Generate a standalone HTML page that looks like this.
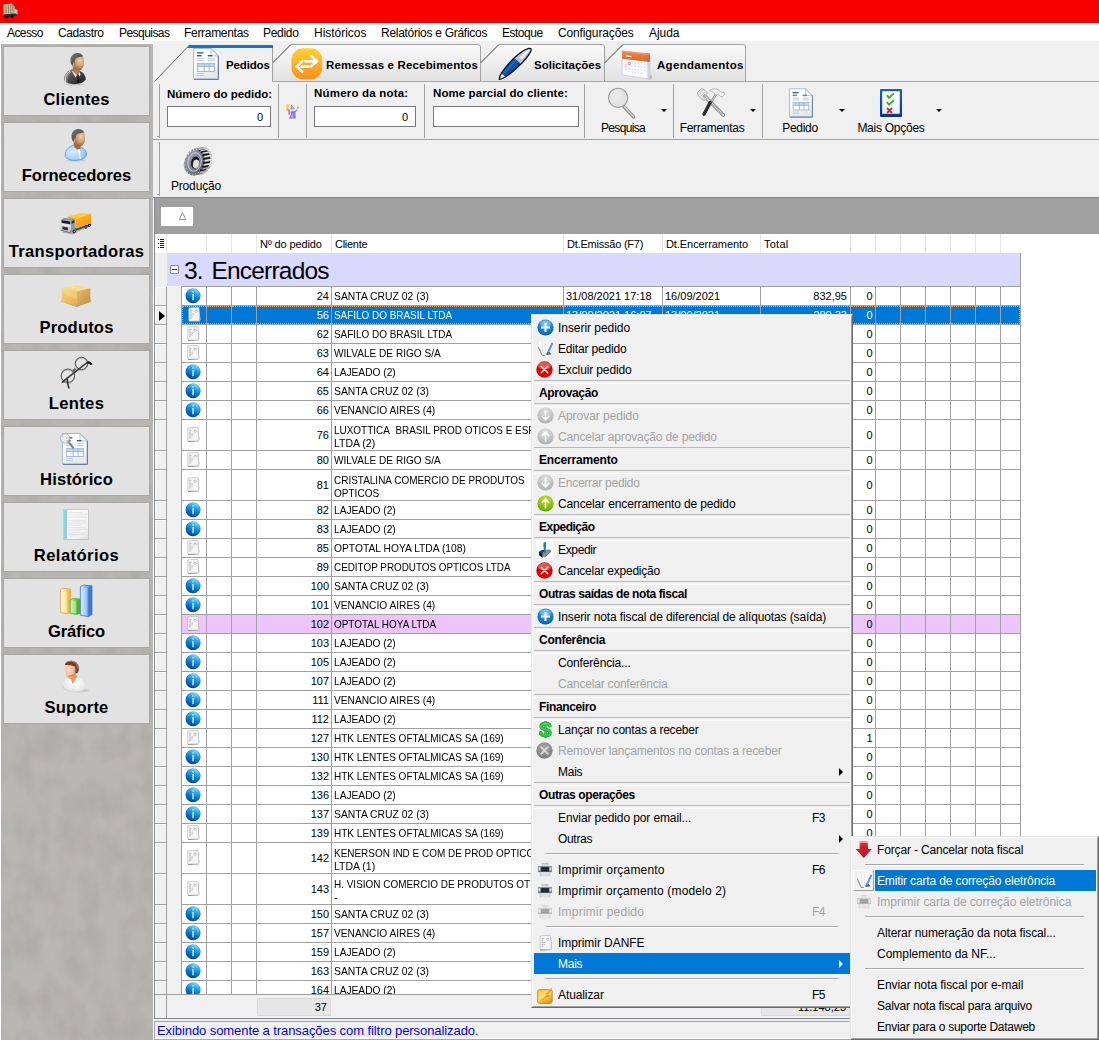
<!DOCTYPE html>
<html><head><meta charset="utf-8"><title>Pedidos</title>
<style>
html,body{margin:0;padding:0}
body{width:1099px;height:1040px;overflow:hidden;position:relative;background:#f0f0f0;font-family:"Liberation Sans",sans-serif;font-size:12px;color:#000}
div,span{box-sizing:border-box}
#title{position:absolute;left:0;top:0;width:1099px;height:23px;background:#f90000}
#menubar{position:absolute;left:0;top:23px;width:1099px;height:18px;background:#fff}
#mbline{position:absolute;left:0;top:41px;width:1099px;height:2px;background:#f0f0f0}
#mbline2{position:absolute;left:0;top:43px;width:1099px;height:1px;background:#fff}
#menubar .mi{position:absolute;top:3px;font-size:12px;line-height:15px;white-space:nowrap}
/* sidebar */
#side{position:absolute;left:1px;top:44px;width:152px;height:996px;background:#b3b1ae;overflow:hidden}
#sidebgw{position:absolute;left:0;top:42px;width:153px;height:998px;background:#fff}
#sidew{position:absolute;left:153px;top:43px;width:2px;height:996px;background:#fff}
#side .edge{display:none}
.sb{position:absolute;left:2px;width:147px;height:70px;background:#e2e2e2;border:1px solid #a9a7a5}
.sb .sl{position:absolute;left:0;top:42px;width:145px;text-align:center;font-weight:bold;font-size:16.6px;line-height:22px;white-space:nowrap;letter-spacing:0}
.sb svg.si{position:absolute;left:52px;top:-1px}
/* tabs */
#tabs{position:absolute;left:153px;top:43px;width:946px;height:39px;background:#f0f0f0}
#tabs svg{position:absolute;left:0;top:0}
.tl{position:absolute;font-weight:bold;font-size:11.5px;line-height:14px;white-space:nowrap;top:15px}
/* toolbars */
#tb1{position:absolute;left:153px;top:82px;width:946px;height:57px;background:#f0f0f0}
#tb2{position:absolute;left:153px;top:140px;width:946px;height:58px;background:#f0f0f0}
.tbline{position:absolute;left:153px;width:946px;height:1px;background:#a0a0a0}
.vsep{position:absolute;width:1px;background:#a0a0a0}
.lbl{position:absolute;font-weight:bold;font-size:11.5px;line-height:13px;white-space:nowrap}
.inp{position:absolute;height:21px;background:#fff;border:1px solid #7a7a7a;font-size:11px;line-height:20px;text-align:right;padding-right:7px}
.tbt{position:absolute;font-size:12px;line-height:14px;white-space:nowrap;text-align:center}
.dd{position:absolute;width:0;height:0;border-left:3px solid transparent;border-right:3px solid transparent;border-top:3px solid #000}
/* grid */
#gframe{position:absolute;left:154px;top:197px;width:946px;height:822px;border:1px solid #828790;background:#fff}
#gpanel{position:absolute;left:155px;top:198px;width:944px;height:36px;background:#a0a0a0}
#gbox{position:absolute;left:6px;top:9px;width:32px;height:19px;background:#fff}
#grid{position:absolute;left:155px;top:234px;width:944px;height:784px;background:#fff;overflow:hidden;font-size:11px}
#ghead{position:absolute;left:0;top:0;width:944px;height:19px;background:#fff}
.hsep{position:absolute;top:0;width:1px;height:19px;background:#e6e6e6}
.ht{position:absolute;top:4px;font-size:11px;line-height:13px;white-space:nowrap}
#gind{position:absolute;left:0;top:19px;width:12px;height:741px;background:#f0f0f0}
#grow{position:absolute;left:12px;top:19px;width:853px;height:33px;background:#d9d9fb}
#grow .gexp{position:absolute;left:3px;top:12px;width:9px;height:9px;border:1px solid #8c8c8c;background:#f4f4f4;border-radius:1px}
#grow .gexp i{position:absolute;left:1px;top:3px;width:5px;height:1px;background:#2a3a9a}
#grow .gt{position:absolute;left:17px;top:3px;font-size:24.5px;line-height:29px;white-space:nowrap;letter-spacing:-0.8px;word-spacing:2.6px}
#glineR{position:absolute;left:865px;top:19px;width:1px;height:741px;background:#a0a0a0}
#glineT{position:absolute;left:26px;top:52px;width:840px;height:1px;background:#a0a0a0}
#gbody{position:absolute;left:0;top:0;width:944px;height:760px;overflow:hidden}
.r{position:absolute;left:0;width:866px;background:#a0a0a0}
.r:before{content:"";position:absolute;left:12px;top:-1px;width:14px;height:calc(100% + 1px);background:#f0f0f0}
.r .ind{position:absolute;left:0;top:0;width:11px;height:calc(100% - 1px);background:#f0f0f0;border-left:1px solid #fff;border-top:1px solid #fff}
.c{position:absolute;top:0;height:calc(100% - 1px);background:#fff;white-space:nowrap;overflow:hidden}
.c span{position:absolute;top:3px;line-height:13px;font-size:11px}
.c3 span{right:2px}
.c4 span{left:2px;transform-origin:0 0}
.c5 span{left:2px}
.c6 span{left:2px}
.c7 span{right:3px}
.c8 span{right:2.4px}
.ic{position:absolute;left:4px;top:1px}
.dbl .ic{margin-top:6px}
.dbl .c3 span,.dbl .c8 span{top:9px}

.sel .c{background:#0078d7;color:#fff;border-top:1px dotted #f0a050;border-bottom:1px dotted #f0a050}
.sel .c span{top:2px}.sel .ic{margin-top:-1px}
.sel .c0{border-left:1px dotted #f0a050}.sel .c14{border-right:1px dotted #f0a050}
.pink .c{background:#edc5fc}
#gfoot{position:absolute;left:0;top:760px;width:944px;height:24px;background:#f0f0f0;border-top:1px solid #a0a0a0}
#gfoot .find{position:absolute;left:0;top:0;width:12px;height:23px;border-right:1px solid #a0a0a0}
#gfoot .fbox{position:absolute;top:3px;height:18px;background:#e6e6e6;border:1px solid #d9d9d9}
#gfoot .fbox span{position:absolute;right:3px;top:2px;font-size:11px;line-height:13px}
#statusbg{position:absolute;left:154px;top:1019px;width:945px;height:21px;background:#f0f0f0;border-bottom:1px solid #a9a8a6}
#status{position:absolute;left:154px;top:1021px;width:945px;height:18px;background:#f0f0f0;border-top:1px solid #a0a0a0;border-left:1px solid #a0a0a0;border-bottom:1px solid #fff}
#status span{position:absolute;left:2px;top:1px;font-size:13px;line-height:15px;color:#0000f0;white-space:nowrap;letter-spacing:-0.08px}
/* menus */
.menu{position:absolute;background:#f2f2f2;border:1px solid #c4c4c4;box-shadow:2px 2px 2px rgba(0,0,0,.45);font-size:12px}
.m{position:absolute;left:1px;height:21px;white-space:nowrap}
.m .t{position:absolute;left:24px;top:4px;line-height:15px;font-size:12px}
.m .k{position:absolute;top:4px;line-height:15px;font-size:12px;letter-spacing:-0.6px}
.m.dis{color:#a2a2a2}
.m.hi{background:#0078d7;color:#fff}
.m svg.mi16{position:absolute;left:4px;top:2px}
.mh{position:absolute;left:1px;height:25px;white-space:nowrap}
.mh b{position:absolute;left:5px;top:6px;font-size:12px;line-height:15px}
.mh i{position:absolute;left:0;width:100%;height:2px;border-top:1px solid #b8b8b8;border-bottom:1px solid #fff}
.ms{position:absolute;height:2px;border-top:1px solid #a8a8a8;border-bottom:1px solid #fff}
.arr{position:absolute;width:0;height:0;border-top:4px solid transparent;border-bottom:4px solid transparent;border-left:4px solid #000}
.hi .arr{border-left-color:#fff}
.menu{border:none;box-shadow:none;background:#f0f0f0}
.menu:before{content:"";position:absolute;left:0;top:0;right:0;bottom:0;border-style:solid;border-width:1px;border-color:#e3e3e3 #696969 #696969 #e3e3e3}
.menu:after{content:"";position:absolute;left:1px;top:1px;right:1px;bottom:1px;border-style:solid;border-width:1px;border-color:#fff #a0a0a0 #a0a0a0 #fff}
.m,.mh,.ms{z-index:2}
.hib{position:absolute;top:0;height:21px;background:#0078d7}
.ibtn{position:absolute;left:0;top:0;width:21px;height:21px;border:1px solid;border-color:#fff #a0a0a0 #a0a0a0 #fff}

</style></head>
<body>
<div id="title"></div>
<svg style="position:absolute;left:2px;top:3px" width="17" height="17" viewBox="0 0 17 17"><path d="M1 1.5 L9.5 0.5 L13 4 L13 10 L1.5 12 Z" fill="#c9bb94"/><path d="M9.5 0.5 L13 4 L13 10 L10.5 11 Z" fill="#a89a78"/><path d="M13 6 L15.5 7 L15.5 11.5 L12 12.5 L12 6.5Z" fill="#c8c2b4"/><path d="M1.5 11.5 L14 10.5 L15.5 12.5 L3 15.5 Z" fill="#2a2a2a"/><rect x="3.5" y="2.5" width="1" height="8" fill="#8f8466"/><rect x="6" y="2.3" width="1" height="8" fill="#8f8466"/><rect x="8.3" y="2" width="1" height="8" fill="#8f8466"/><circle cx="4" cy="14" r="1.6" fill="#111"/><circle cx="10" cy="13.5" r="1.6" fill="#111"/></svg>
<div id="menubar"><span class="mi" style="left:7px;letter-spacing:-0.596px">Acesso</span><span class="mi" style="left:58px;letter-spacing:-0.395px">Cadastro</span><span class="mi" style="left:119px;letter-spacing:-0.546px">Pesquisas</span><span class="mi" style="left:184px;letter-spacing:-0.302px">Ferramentas</span><span class="mi" style="left:263px;letter-spacing:-0.288px">Pedido</span><span class="mi" style="left:314px;letter-spacing:-0.02px">Históricos</span><span class="mi" style="left:381px;letter-spacing:-0.282px">Relatórios e Gráficos</span><span class="mi" style="left:502px;letter-spacing:-0.493px">Estoque</span><span class="mi" style="left:558px;letter-spacing:-0.14px">Configurações</span><span class="mi" style="left:649px;letter-spacing:-0.054px">Ajuda</span></div><div id="mbline"></div><div id="mbline2"></div>
<div id="sidebgw"></div><div id="side"><svg style="position:absolute;left:0;top:0" width="152" height="996"><defs><filter id="mb" x="0" y="0" width="100%" height="100%" color-interpolation-filters="sRGB"><feTurbulence type="fractalNoise" baseFrequency="0.03 0.022" numOctaves="4" seed="11"/><feColorMatrix type="matrix" values="0 0 0 0 0.702  0 0 0 0 0.694  0 0 0 0 0.682  0.9 0.9 0 0 -0.62"/></filter><filter id="mb2" x="0" y="0" width="100%" height="100%" color-interpolation-filters="sRGB"><feTurbulence type="fractalNoise" baseFrequency="0.05 0.035" numOctaves="3" seed="3"/><feColorMatrix type="matrix" values="0 0 0 0 0.62  0 0 0 0 0.61  0 0 0 0 0.60  0 0.9 0.9 0 -0.72"/></filter></defs><rect width="152" height="996" fill="#b9b7b4"/><rect width="152" height="996" filter="url(#mb)" opacity="0.55"/><rect width="152" height="996" filter="url(#mb2)" opacity="0.6"/></svg>
<div class="sb" style="top:2px"><svg class="si" width="44" height="46" viewBox="56 46 44 46"><defs>
<radialGradient id="skin1" cx="0.62" cy="0.3" r="0.75"><stop offset="0" stop-color="#f2cfa4"/><stop offset="0.55" stop-color="#cf9c70"/><stop offset="1" stop-color="#8a5a34"/></radialGradient>
<linearGradient id="suit" x1="0" y1="0" x2="1" y2="1"><stop offset="0" stop-color="#8a8a8a"/><stop offset="0.45" stop-color="#4c4c4c"/><stop offset="1" stop-color="#1c1c1c"/></linearGradient>
<linearGradient id="hair1" x1="0" y1="0" x2="1" y2="1"><stop offset="0" stop-color="#7c7c7c"/><stop offset="1" stop-color="#2c3034"/></linearGradient></defs>
<ellipse cx="75" cy="84.3" rx="10" ry="1.2" fill="#000" opacity="0.12"/>
<path d="M64.3 80 Q64 72.5 71.5 69.5 L73 69 L80 71 Q85.8 73.5 85.6 79.5 Q83 84 74 84.2 Q66 84 64.3 80Z" fill="url(#suit)"/>
<path d="M65.6 81.5 Q64.6 74.5 70.3 71" fill="none" stroke="#f4f4f4" stroke-width="0.9"/><path d="M67 82.6 Q65.8 75.6 71.4 71.6" fill="none" stroke="#c8c8c8" stroke-width="0.6"/>
<path d="M72.6 66 L79.5 68 L79.5 73 L77.5 75.5 L72.8 70Z" fill="#b47a48"/>
<path d="M76 73.6 L77.6 75.4 L79.6 72.2 L80.6 74.6 L78.4 77.6 Z" fill="#f4f4f4"/><path d="M72.6 70.4 L77 75 L75.6 77.4 Q73 74 72 71Z" fill="#dcdcdc"/>
<path d="M77.3 74.6 L78.7 74.6 L79.3 81.5 L78.3 83.6 L77.2 81.8Z" fill="#0c0c0c"/>
<path d="M73.6 57.5 Q78 55.5 83.4 57.2 Q84.6 62 83.6 66 Q82 70.2 79 70.2 Q75.5 69.6 73.6 65.5 Q72.4 61 73.6 57.5Z" fill="url(#skin1)"/>
<path d="M70.6 62.5 Q69.6 54.5 76 53 Q81 52.4 83.3 56.4 Q79.5 56.4 75.6 58.2 Q74.6 60.6 74.6 62.6 L73.2 62.4 Q72.6 64.6 73.2 66 Q71 65 70.6 62.5Z" fill="url(#hair1)"/>
</svg><div class="sl" style="letter-spacing:0.211px">Clientes</div></div><div class="sb" style="top:78px"><svg class="si" width="44" height="46" viewBox="56 122 44 46"><defs>
<radialGradient id="blu" cx="0.35" cy="0.45" r="0.8"><stop offset="0" stop-color="#d8eeff"/><stop offset="0.6" stop-color="#a4d2fa"/><stop offset="1" stop-color="#62a8ea"/></radialGradient></defs>
<ellipse cx="76" cy="160.5" rx="10" ry="1.2" fill="#000" opacity="0.1"/>
<path d="M65.2 156.4 Q64.6 148.6 72.5 145.6 L74 145 L81 147 Q87 149.6 86.6 155.6 Q84 160.2 75 160.4 Q67 160.2 65.2 156.4Z" fill="url(#blu)" stroke="#4a90d8" stroke-width="0.7"/>
<path d="M73.6 142 L80.5 144 L80.5 149 L78.5 151.5 L73.8 146Z" fill="#a86a3a"/>
<path d="M76.6 149.8 L80.4 149 L81 158.6 L79.8 159.2 Q79.4 153 76.6 149.8Z" fill="#fcfcfc"/><path d="M80.4 149 L81.4 147.2 Q81.8 153 81 158.6Z" fill="#8cc0f0"/>
<path d="M74.6 133.5 Q79 131.5 84.4 133.2 Q85.6 138 84.6 142 Q83 146.2 80 146.2 Q76.5 145.6 74.6 141.5 Q73.4 137 74.6 133.5Z" fill="url(#skin1)"/>
<path d="M71.6 138.5 Q70.6 130.5 77 129 Q82 128.4 84.3 132.4 Q80.5 132.4 76.6 134.2 Q75.6 136.6 75.6 138.6 L74.2 138.4 Q73.6 140.6 74.2 142 Q72 141 71.6 138.5Z" fill="url(#hair1)"/>
</svg><div class="sl" style="letter-spacing:-0.019px">Fornecedores</div></div><div class="sb" style="top:154px"><svg class="si" width="44" height="46" viewBox="56 198 44 46"><defs>
<linearGradient id="org" x1="0" y1="0" x2="1" y2="1"><stop offset="0" stop-color="#ffb820"/><stop offset="1" stop-color="#f89408"/></linearGradient></defs>
<path d="M62 232.6 L72 234.6 L91.6 225.6 L91 224 L74 228Z" fill="#000" opacity="0.22"/>
<path d="M75.2 227.8 L76.6 228.6 L91.2 223.4 L91.2 225 L76.6 230.4 L75.2 230Z" fill="#2c4a66"/>
<path d="M67.9 216.6 L81 213 L91 213.8 L77 218.4Z" fill="#ffcc38"/>
<path d="M75.2 219.3 L91 213.8 L91 223.1 L76.6 228.2 L75.2 227.8Z" fill="url(#org)"/>
<path d="M67.9 216.6 L77 218.4 L75.2 219.3 L68 218Z" fill="#f0a010"/>
<path d="M60.8 219.9 L64 218 L75 219 L75 230.8 L70.6 233 L60.8 230.6Z" fill="#c4ccd6"/>
<path d="M64 218 L75 219 L71 220.8 L60.8 219.9Z" fill="#8a94a0"/>
<path d="M71 220.8 L75 219 L75 230.8 L71 232.9Z" fill="#8e9aa8"/>
<path d="M61.6 220.3 L70.2 221.4 L70.2 224.2 L61.6 222.8Z" fill="#16181c"/>
<path d="M71.6 221.2 L74.4 219.9 L74.4 222.6 L71.6 224Z" fill="#2a2e36"/>
<path d="M61.2 223.6 L70.4 225.2 L70.4 227 L61.2 225.2Z" fill="#e6eaee"/>
<path d="M62.4 226.4 L67.9 227.5 L67.9 230.4 L62.4 229.2Z" fill="#2c2e32"/>
<path d="M60.6 229.6 L70.6 232.2 L70.6 233.2 L60.6 230.8Z" fill="#5a7a8c"/>
<rect x="60.8" y="228.4" width="1.2" height="1.3" fill="#f8d84a"/><rect x="68.6" y="230.2" width="1.3" height="1.3" fill="#f8d84a"/><rect x="70" y="230.4" width="0.8" height="1.4" fill="#d83030"/>
<ellipse cx="74.1" cy="231.4" rx="1.5" ry="2" fill="#0a0a0a"/><ellipse cx="74.2" cy="231.5" rx="0.7" ry="1" fill="#d0d0d0"/>
<ellipse cx="85.9" cy="227" rx="1.4" ry="1.8" fill="#0a0a0a"/><ellipse cx="86" cy="227.1" rx="0.6" ry="0.9" fill="#c8c8c8"/>
<ellipse cx="89.2" cy="225.4" rx="1.3" ry="1.7" fill="#0a0a0a"/><ellipse cx="89.3" cy="225.5" rx="0.6" ry="0.8" fill="#c8c8c8"/>
</svg><div class="sl" style="letter-spacing:0.306px">Transportadoras</div></div><div class="sb" style="top:230px"><svg class="si" width="44" height="46" viewBox="56 274 44 46"><defs>
<linearGradient id="bxl" x1="0" y1="0" x2="1" y2="1"><stop offset="0" stop-color="#f8d880"/><stop offset="1" stop-color="#e4a848"/></linearGradient>
<linearGradient id="bxr" x1="0" y1="0" x2="1" y2="1"><stop offset="0" stop-color="#e4bc70"/><stop offset="1" stop-color="#c88c34"/></linearGradient></defs>
<path d="M61 301.4 L76.6 307 L91 301.6 L90.3 300 L76.6 304 L61.8 300Z" fill="#3a3a4a" opacity="0.45"/>
<path d="M61.8 287.9 L76.6 285.2 L90.3 288.2 L76.6 291.5Z" fill="#f8dc8c"/>
<path d="M68.5 286.7 L83 289.9 L84.4 289.5 L70 286.4Z" fill="#fbe8a8"/>
<path d="M61.8 287.9 L76.6 291.5 L76.6 306.2 L61.8 301.9Z" fill="url(#bxl)"/>
<path d="M76.6 291.5 L90.3 288.2 L90.3 302.1 L76.6 306.2Z" fill="url(#bxr)"/>
<path d="M62 288.2 Q66 297 76.4 299 L76.4 291.7Z" fill="#fbe4a0" opacity="0.35"/>
</svg><div class="sl" style="letter-spacing:0.158px">Produtos</div></div><div class="sb" style="top:306px"><svg class="si" width="44" height="46" viewBox="56 350 44 46">
<circle cx="81.5" cy="364.4" r="6.2" fill="#e8e8e8" fill-opacity="0.5" stroke="#9a9a9a" stroke-width="0.7"/>
<circle cx="67.9" cy="376.7" r="6.7" fill="#e8e8e8" fill-opacity="0.5" stroke="#9a9a9a" stroke-width="0.7"/>
<circle cx="81.5" cy="363.4" r="6.2" fill="none" stroke="#3c3c3c" stroke-width="0.9"/>
<circle cx="67.9" cy="375.7" r="6.7" fill="none" stroke="#3c3c3c" stroke-width="0.9"/>
<path d="M62.2 382.4 L64.4 380.4 L87 362.6 Q89.6 361.6 91.6 364.4" fill="none" stroke="#383838" stroke-width="1.5"/>
<path d="M87.6 362.4 Q90 362.2 91.6 364.6" fill="none" stroke="#111" stroke-width="2.2"/>
<path d="M72.6 371.6 L75.6 368.6" stroke="#6a6a6a" stroke-width="2.2"/>
<path d="M67.2 378.2 Q67 383 69 388.4" fill="none" stroke="#2c2c2c" stroke-width="1.5"/>
<path d="M61.4 383.4 L62.6 380.6 L63.8 382.2Z" fill="#444"/>
</svg><div class="sl" style="letter-spacing:0.329px">Lentes</div></div><div class="sb" style="top:382px"><svg class="si" width="44" height="46" viewBox="56 426 44 46">
<g transform="translate(62 433)"><use href="#docbig"/></g>
<circle cx="65.1" cy="438.3" r="4.7" fill="#e4e6ea" fill-opacity="0.82" stroke="#a8a8a8" stroke-width="0.8"/>
<path d="M68.6 441.8 L73 447.6" stroke="#7a7a7a" stroke-width="1.8" stroke-linecap="round"/><path d="M68.4 441.4 L70 443.4" stroke="#9a9a9a" stroke-width="1"/>
</svg><div class="sl" style="letter-spacing:0.102px">Histórico</div></div><div class="sb" style="top:458px"><svg class="si" width="44" height="46" viewBox="56 502 44 46"><defs>
<linearGradient id="pg2" x1="0" y1="0" x2="1" y2="1"><stop offset="0" stop-color="#ffffff"/><stop offset="0.75" stop-color="#f4f4f4"/><stop offset="1" stop-color="#e0e0e0"/></linearGradient></defs>
<rect x="63.6" y="509.6" width="25.4" height="30.4" fill="#8a8a8a" opacity="0.5"/>
<rect x="63.4" y="509.3" width="25" height="30" fill="url(#pg2)" stroke="#c4c2c0" stroke-width="0.8"/>
<rect x="64" y="510" width="3" height="28.8" fill="#8cd2e6"/>
<path d="M68.4 512.5h14.5M68.4 514.1h18.5M68.4 516.1h17.5M68.4 517.7h18.5M68.4 520.3h18M68.4 522h18.5M68.4 523.7h18M68.4 525.3h12.5M68.4 527.6h17.5M68.4 529.2h18.5M68.4 530.8h12M68.4 532.8h18M68.4 534.4h16M68.4 536h10" stroke="#dcdcdc" stroke-width="0.7"/>
</svg><div class="sl" style="letter-spacing:0.431px">Relatórios</div></div><div class="sb" style="top:534px"><svg class="si" width="44" height="46" viewBox="56 578 44 46"><defs>
<linearGradient id="by" x1="0" y1="0" x2="1" y2="0"><stop offset="0" stop-color="#fff4d0"/><stop offset="0.55" stop-color="#fbd880"/><stop offset="1" stop-color="#f0b040"/></linearGradient>
<linearGradient id="bg" x1="0" y1="0" x2="1" y2="0"><stop offset="0" stop-color="#c8f0b0"/><stop offset="0.55" stop-color="#70d048"/><stop offset="1" stop-color="#48b020"/></linearGradient>
<linearGradient id="bb" x1="0" y1="0" x2="1" y2="0"><stop offset="0" stop-color="#d4e8ff"/><stop offset="0.5" stop-color="#78b0f4"/><stop offset="1" stop-color="#3878d0"/></linearGradient></defs>
<path d="M60.6 589.6 L63 588.2 L70.6 589 L70.6 612.4 L67.6 613.8 L60.6 612.6Z" fill="url(#by)" stroke="#d89c38" stroke-width="0.7"/>
<path d="M67.4 590.8 L70.6 589 L70.6 612.4 L67.6 613.8Z" fill="#f0b848" opacity="0.85"/>
<path d="M61.6 590.4 L66.6 591 L66.6 612.4 L61.6 611.6Z" fill="#fff" opacity="0.35"/>
<path d="M70.2 600 L73 598.4 L80.2 599 L80.2 613 L77 614.6 L70.2 613.2Z" fill="url(#bg)" stroke="#48a828" stroke-width="0.7"/>
<path d="M77 600.8 L80.2 599 L80.2 613 L77 614.6Z" fill="#4cb424" opacity="0.9"/>
<path d="M71.2 600.8 L76 601.4 L76 613.2 L71.2 612.4Z" fill="#fff" opacity="0.3"/>
<path d="M80.4 586.6 L83.4 585 L92 585.8 L92 614.6 L88.4 616.8 L80.4 615.2Z" fill="url(#bb)" stroke="#3870c0" stroke-width="0.7"/>
<path d="M88.2 588 L92 585.8 L92 614.6 L88.4 616.8Z" fill="#3c78cc" opacity="0.9"/>
<path d="M81.4 587.6 L87.2 588.2 L87.2 615.4 L81.4 614.2Z" fill="#fff" opacity="0.3"/>
</svg><div class="sl" style="letter-spacing:-0.143px">Gráfico</div></div><div class="sb" style="top:610px"><svg class="si" width="44" height="46" viewBox="56 654 44 46"><defs>
<radialGradient id="skin2" cx="0.35" cy="0.3" r="0.8"><stop offset="0" stop-color="#ffe0c4"/><stop offset="0.6" stop-color="#fcb888"/><stop offset="1" stop-color="#e08848"/></radialGradient>
<radialGradient id="shirt" cx="0.55" cy="0.4" r="0.7"><stop offset="0" stop-color="#ffffff"/><stop offset="0.7" stop-color="#e8e8e8"/><stop offset="1" stop-color="#b4b8bc"/></radialGradient></defs>
<ellipse cx="80" cy="690.4" rx="9" ry="2" fill="#000" opacity="0.1"/>
<path d="M62 687 Q62.4 680.5 69 678 L72 676.6 L77.4 676.8 Q86 680 85.8 688 Q83 692.4 74 692.4 Q65 691.6 62 687Z" fill="url(#shirt)"/>
<path d="M70 678 L72.6 684 L77.6 676.6 L75.4 674.4 L70.6 675Z" fill="#f09458"/>
<path d="M67.4 678.4 L70 677 L72.4 683.6 L70 681.4Z" fill="#fdfdfd"/><path d="M72.6 684 L76.8 677.4 L78.6 680.6 L74 685Z" fill="#f4f4f4"/>
<path d="M65.4 665.8 Q70 663.8 75 666 L75.6 672 Q75.4 676.6 71.6 679.2 Q68 679.4 66 675 Q64.8 670.4 65.4 665.8Z" fill="url(#skin2)"/>
<path d="M64.8 665 Q66 660.6 72 660.8 Q78.4 661.4 79 669 Q78.8 671.8 77.2 673.2 L76 673 Q76 668.6 74.8 666.4 Q70 664.6 64.8 665Z" fill="#7c3c1a"/>
<path d="M67 661.6 Q72 660 75.4 662.6 Q77.6 665 77.6 669.4" fill="none" stroke="#9aa0a8" stroke-width="0.9"/>
<ellipse cx="76.4" cy="670.6" rx="1.5" ry="2.6" fill="#3a3e44"/><ellipse cx="76" cy="670.4" rx="0.7" ry="1.6" fill="#8a9098"/>
<path d="M76 673.4 Q73 676.2 68.6 676.4" fill="none" stroke="#6a7078" stroke-width="0.7"/>
<path d="M73.6 686 v0.8 M73.4 689 v0.8" stroke="#c0c4c8" stroke-width="0.8"/>
</svg><div class="sl" style="letter-spacing:0.207px">Suporte</div></div></div><div id="sidew"></div>
<div id="tabs"><svg width="946" height="40" viewBox="0 0 946 40">
<defs><linearGradient id="tg" x1="0" y1="0" x2="0" y2="1"><stop offset="0" stop-color="#fafafa"/><stop offset="1" stop-color="#e1e1e1"/></linearGradient></defs>
<path d="M119.5 38.5 L119.5 20 L138 1.5 L325 1.5 Q327.5 1.5 327.5 4 L327.5 38.5 Z" fill="url(#tg)" stroke="#a3a3a3"/>
<path d="M327.5 38.5 L327.5 20 L346 1.5 L449 1.5 Q451.5 1.5 451.5 4 L451.5 38.5 Z" fill="url(#tg)" stroke="#a3a3a3"/>
<path d="M451.5 38.5 L451.5 20 L470 1.5 L590 1.5 Q592.5 1.5 592.5 4 L592.5 38.5 Z" fill="url(#tg)" stroke="#a3a3a3"/>
<path d="M119 38.5 L946 38.5" stroke="#a6a6a6"/><path d="M119.5 20 L138 1.5 M327.5 20 L346 1.5 M451.5 20 L470 1.5" stroke="#5a5a5a" stroke-width="0.9" fill="none"/>
<path d="M1.5 38.5 L37 1.5 L119.5 1.5 L119.5 39 L1.5 39Z" fill="#f0f0f0"/>
<path d="M1.5 38.5 L37 1.5" stroke="#5a5a5a" stroke-width="0.9" fill="none"/><path d="M119.5 4 L119.5 38.5" stroke="#a0a0a0" fill="none"/>
<path d="M36.5 2 L119 2 Q120 2 120 3 L120 5 L34 5Z" fill="#0f74d4"/>
</svg>
<svg style="left:40px;top:5px" width="26" height="32" viewBox="0 0 26 32"><use href="#t-ped"/></svg>
<svg style="left:138px;top:5px" width="32" height="32" viewBox="0 0 32 32"><use href="#t-rem"/></svg>
<svg style="left:344px;top:3px" width="36" height="36" viewBox="0 0 36 36"><use href="#t-sol"/></svg>
<svg style="left:468px;top:7px" width="31" height="31" viewBox="0 0 31 31"><use href="#t-age"/></svg>
<span class="tl" style="left:73px;letter-spacing:-0.139px">Pedidos</span>
<span class="tl" style="left:173px;letter-spacing:0.164px">Remessas e Recebimentos</span>
<span class="tl" style="left:381px;letter-spacing:0.003px">Solicitações</span>
<span class="tl" style="left:504px;letter-spacing:0.303px">Agendamentos</span>
</div>
<div id="tb1">
<div class="vsep" style="left:6px;top:2px;height:54px"></div><div class="vsep" style="left:4px;top:54px;height:1px;width:3px"></div>
<span class="lbl" style="left:14px;top:6px;letter-spacing:-0.021px">Número do pedido:</span>
<div class="inp" style="left:14px;top:24px;width:104px">0</div>
<div class="vsep" style="left:125px;top:2px;height:54px"></div>
<svg style="position:absolute;left:132px;top:20.5px;opacity:0.8" width="16" height="16" viewBox="0 0 16 16"><use href="#i-wiz"/></svg>
<div class="vsep" style="left:153px;top:2px;height:54px"></div>
<span class="lbl" style="left:161px;top:5px;letter-spacing:0.194px">Número da nota:</span>
<div class="inp" style="left:161px;top:24px;width:102px">0</div>
<div class="vsep" style="left:271px;top:2px;height:54px"></div>
<span class="lbl" style="left:280px;top:5px;letter-spacing:0.083px">Nome parcial do cliente:</span>
<div class="inp" style="left:280px;top:24px;width:146px"></div>
<div class="vsep" style="left:431px;top:2px;height:54px"></div>
<svg style="position:absolute;left:454px;top:5px" width="32" height="32" viewBox="0 0 32 32"><use href="#b-lupa"/></svg>
<span class="tbt" style="left:440px;top:39px;width:60px;letter-spacing:-0.67px">Pesquisa</span>
<div class="dd" style="left:508px;top:27px"></div>
<div class="vsep" style="left:520px;top:2px;height:54px"></div>
<svg style="position:absolute;left:543px;top:5.5px" width="31" height="30" viewBox="0 0 32 32"><use href="#b-ferr"/></svg>
<span class="tbt" style="left:518px;top:39px;width:82px;letter-spacing:-0.302px">Ferramentas</span>
<div class="dd" style="left:597px;top:27px"></div>
<div class="vsep" style="left:609px;top:2px;height:54px"></div>
<svg style="position:absolute;left:636px;top:6px" width="24" height="30" viewBox="0 0 26 32"><use href="#t-ped"/></svg>
<span class="tbt" style="left:617px;top:39px;width:60px;letter-spacing:-0.288px">Pedido</span>
<div class="dd" style="left:686px;top:27px"></div>
<svg style="position:absolute;left:727px;top:7px" width="22" height="28" viewBox="0 0 22 28"><use href="#b-mais"/></svg>
<span class="tbt" style="left:698px;top:39px;width:80px;letter-spacing:-0.253px">Mais Opções</span>
<div class="dd" style="left:783px;top:27px"></div>
</div>
<div class="tbline" style="top:139px"></div>
<div id="tb2">
<div class="vsep" style="left:6px;top:2px;height:54px"></div><div class="vsep" style="left:4px;top:54px;height:1px;width:3px"></div>
<svg style="position:absolute;left:29px;top:6px" width="30" height="31" viewBox="0 0 30 31"><use href="#b-gear"/></svg>
<span class="tbt" style="left:13px;top:39px;width:60px;letter-spacing:-0.142px">Produção</span>
</div>
<div class="tbline" style="top:197px;background:#8c8c8c"></div>
<div id="gframe"></div><div id="gpanel"><div id="gbox"><svg width="9" height="8" viewBox="0 0 9 8" style="position:absolute;left:17px;top:5px"><path d="M4.5 0.6 L7.7 7.5 L1.3 7.5 Z" fill="none" stroke="#8e8e8e" stroke-width="0.9"/></svg></div></div>
<div id="grid"><div id="ghead"><svg width="6" height="9" viewBox="0 0 6 9" style="position:absolute;left:3px;top:5px"><g fill="#1a1a1a"><rect x="0" y="0" width="1" height="1"/><rect x="2" y="0" width="4" height="1"/><rect x="2" y="2" width="4" height="1"/><rect x="0" y="4" width="1" height="1"/><rect x="2" y="4" width="4" height="1"/><rect x="2" y="6" width="4" height="1"/><rect x="0" y="8" width="1" height="1"/><rect x="2" y="8" width="4" height="1"/></g></svg><div class="hsep" style="left:11px"></div><div class="hsep" style="left:51px"></div><div class="hsep" style="left:76px"></div><div class="hsep" style="left:101px"></div><div class="hsep" style="left:176px"></div><div class="hsep" style="left:408px"></div><div class="hsep" style="left:507px"></div><div class="hsep" style="left:605px"></div><div class="hsep" style="left:695px"></div><div class="hsep" style="left:720px"></div><div class="hsep" style="left:745px"></div><div class="hsep" style="left:770px"></div><div class="hsep" style="left:795px"></div><div class="hsep" style="left:820px"></div><div class="hsep" style="left:845px"></div><span class="ht" style="left:105px;letter-spacing:-0.134px">Nº do pedido</span><span class="ht" style="left:180px;letter-spacing:-0.271px">Cliente</span><span class="ht" style="left:412px;letter-spacing:-0.217px">Dt.Emissão (F7)</span><span class="ht" style="left:511px;letter-spacing:-0.073px">Dt.Encerramento</span><span class="ht" style="left:609px;letter-spacing:0.24px">Total</span></div><div id="gind"></div><div id="grow"><div class="gexp"><i></i></div><span class="gt">3. Encerrados</span></div><div id="glineR"></div><div id="glineT"></div><div id="gbody"><div class="r" style="top:53px;height:19px"><div class="ind"></div><div class="c c0" style="left:27px;width:24px"><svg class="ic" style="left:3px;top:1px" width="16" height="16" viewBox="-0.07 0.2 16 16"><use href="#i-info"/></svg></div><div class="c c1" style="left:52px;width:24px"></div><div class="c c2" style="left:77px;width:24px"></div><div class="c c3" style="left:102px;width:74px"><span>24</span></div><div class="c c4" style="left:177px;width:231px"><span style="transform:scaleX(0.9424)">SANTA CRUZ 02 (3)</span></div><div class="c c5" style="left:409px;width:98px"><span>31/08/2021 17:18</span></div><div class="c c6" style="left:508px;width:97px"><span>16/09/2021</span></div><div class="c c7" style="left:606px;width:89px"><span>832,95</span></div><div class="c c8" style="left:696px;width:24px"><span>0</span></div><div class="c c9" style="left:721px;width:24px"></div><div class="c c10" style="left:746px;width:24px"></div><div class="c c11" style="left:771px;width:24px"></div><div class="c c12" style="left:796px;width:24px"></div><div class="c c13" style="left:821px;width:24px"></div><div class="c c14" style="left:846px;width:19px"></div></div><div class="r sel" style="top:72px;height:19px"><div class="ind"><svg width="6" height="10" viewBox="0 0 6 10" style="position:absolute;left:3px;top:4px"><path d="M0 0 L6 5 L0 10 Z" fill="#000"/></svg></div><div class="c c0" style="left:27px;width:24px"><svg class="ic" style="left:5px;top:1px" width="13.5" height="15.5" viewBox="0 0 14 16"><use href="#i-doc"/></svg></div><div class="c c1" style="left:52px;width:24px"></div><div class="c c2" style="left:77px;width:24px"></div><div class="c c3" style="left:102px;width:74px"><span>56</span></div><div class="c c4" style="left:177px;width:231px"><span style="transform:scaleX(0.9023)">SAFILO DO BRASIL LTDA</span></div><div class="c c5" style="left:409px;width:98px"><span>13/09/2021 16:07</span></div><div class="c c6" style="left:508px;width:97px"><span>13/09/2021</span></div><div class="c c7" style="left:606px;width:89px"><span>280,33</span></div><div class="c c8" style="left:696px;width:24px"><span>0</span></div><div class="c c9" style="left:721px;width:24px"></div><div class="c c10" style="left:746px;width:24px"></div><div class="c c11" style="left:771px;width:24px"></div><div class="c c12" style="left:796px;width:24px"></div><div class="c c13" style="left:821px;width:24px"></div><div class="c c14" style="left:846px;width:19px"></div></div><div class="r" style="top:91px;height:19px"><div class="ind"></div><div class="c c0" style="left:27px;width:24px"><svg class="ic" style="left:5px;top:1px" width="13.5" height="15.5" viewBox="0 0 14 16"><use href="#i-doc"/></svg></div><div class="c c1" style="left:52px;width:24px"></div><div class="c c2" style="left:77px;width:24px"></div><div class="c c3" style="left:102px;width:74px"><span>62</span></div><div class="c c4" style="left:177px;width:231px"><span style="transform:scaleX(0.9023)">SAFILO DO BRASIL LTDA</span></div><div class="c c5" style="left:409px;width:98px"><span></span></div><div class="c c6" style="left:508px;width:97px"><span></span></div><div class="c c7" style="left:606px;width:89px"><span></span></div><div class="c c8" style="left:696px;width:24px"><span>0</span></div><div class="c c9" style="left:721px;width:24px"></div><div class="c c10" style="left:746px;width:24px"></div><div class="c c11" style="left:771px;width:24px"></div><div class="c c12" style="left:796px;width:24px"></div><div class="c c13" style="left:821px;width:24px"></div><div class="c c14" style="left:846px;width:19px"></div></div><div class="r" style="top:110px;height:19px"><div class="ind"></div><div class="c c0" style="left:27px;width:24px"><svg class="ic" style="left:5px;top:1px" width="13.5" height="15.5" viewBox="0 0 14 16"><use href="#i-doc"/></svg></div><div class="c c1" style="left:52px;width:24px"></div><div class="c c2" style="left:77px;width:24px"></div><div class="c c3" style="left:102px;width:74px"><span>63</span></div><div class="c c4" style="left:177px;width:231px"><span style="transform:scaleX(0.9179)">WILVALE DE RIGO S/A</span></div><div class="c c5" style="left:409px;width:98px"><span></span></div><div class="c c6" style="left:508px;width:97px"><span></span></div><div class="c c7" style="left:606px;width:89px"><span></span></div><div class="c c8" style="left:696px;width:24px"><span>0</span></div><div class="c c9" style="left:721px;width:24px"></div><div class="c c10" style="left:746px;width:24px"></div><div class="c c11" style="left:771px;width:24px"></div><div class="c c12" style="left:796px;width:24px"></div><div class="c c13" style="left:821px;width:24px"></div><div class="c c14" style="left:846px;width:19px"></div></div><div class="r" style="top:129px;height:19px"><div class="ind"></div><div class="c c0" style="left:27px;width:24px"><svg class="ic" style="left:3px;top:1px" width="16" height="16" viewBox="-0.07 0.2 16 16"><use href="#i-info"/></svg></div><div class="c c1" style="left:52px;width:24px"></div><div class="c c2" style="left:77px;width:24px"></div><div class="c c3" style="left:102px;width:74px"><span>64</span></div><div class="c c4" style="left:177px;width:231px"><span style="transform:scaleX(0.9262)">LAJEADO (2)</span></div><div class="c c5" style="left:409px;width:98px"><span></span></div><div class="c c6" style="left:508px;width:97px"><span></span></div><div class="c c7" style="left:606px;width:89px"><span></span></div><div class="c c8" style="left:696px;width:24px"><span>0</span></div><div class="c c9" style="left:721px;width:24px"></div><div class="c c10" style="left:746px;width:24px"></div><div class="c c11" style="left:771px;width:24px"></div><div class="c c12" style="left:796px;width:24px"></div><div class="c c13" style="left:821px;width:24px"></div><div class="c c14" style="left:846px;width:19px"></div></div><div class="r" style="top:148px;height:19px"><div class="ind"></div><div class="c c0" style="left:27px;width:24px"><svg class="ic" style="left:3px;top:1px" width="16" height="16" viewBox="-0.07 0.2 16 16"><use href="#i-info"/></svg></div><div class="c c1" style="left:52px;width:24px"></div><div class="c c2" style="left:77px;width:24px"></div><div class="c c3" style="left:102px;width:74px"><span>65</span></div><div class="c c4" style="left:177px;width:231px"><span style="transform:scaleX(0.9424)">SANTA CRUZ 02 (3)</span></div><div class="c c5" style="left:409px;width:98px"><span></span></div><div class="c c6" style="left:508px;width:97px"><span></span></div><div class="c c7" style="left:606px;width:89px"><span></span></div><div class="c c8" style="left:696px;width:24px"><span>0</span></div><div class="c c9" style="left:721px;width:24px"></div><div class="c c10" style="left:746px;width:24px"></div><div class="c c11" style="left:771px;width:24px"></div><div class="c c12" style="left:796px;width:24px"></div><div class="c c13" style="left:821px;width:24px"></div><div class="c c14" style="left:846px;width:19px"></div></div><div class="r" style="top:167px;height:19px"><div class="ind"></div><div class="c c0" style="left:27px;width:24px"><svg class="ic" style="left:3px;top:1px" width="16" height="16" viewBox="-0.07 0.2 16 16"><use href="#i-info"/></svg></div><div class="c c1" style="left:52px;width:24px"></div><div class="c c2" style="left:77px;width:24px"></div><div class="c c3" style="left:102px;width:74px"><span>66</span></div><div class="c c4" style="left:177px;width:231px"><span style="transform:scaleX(0.9254)">VENANCIO AIRES (4)</span></div><div class="c c5" style="left:409px;width:98px"><span></span></div><div class="c c6" style="left:508px;width:97px"><span></span></div><div class="c c7" style="left:606px;width:89px"><span></span></div><div class="c c8" style="left:696px;width:24px"><span>0</span></div><div class="c c9" style="left:721px;width:24px"></div><div class="c c10" style="left:746px;width:24px"></div><div class="c c11" style="left:771px;width:24px"></div><div class="c c12" style="left:796px;width:24px"></div><div class="c c13" style="left:821px;width:24px"></div><div class="c c14" style="left:846px;width:19px"></div></div><div class="r dbl" style="top:186px;height:31px"><div class="ind"></div><div class="c c0" style="left:27px;width:24px"><svg class="ic" style="left:5px;top:1px" width="13.5" height="15.5" viewBox="0 0 14 16"><use href="#i-doc"/></svg></div><div class="c c1" style="left:52px;width:24px"></div><div class="c c2" style="left:77px;width:24px"></div><div class="c c3" style="left:102px;width:74px"><span>76</span></div><div class="c c4" style="left:177px;width:231px"><span style="transform:scaleX(0.905);top:4px">LUXOTTICA&nbsp; BRASIL PROD OTICOS E ESP</span><span style="transform:scaleX(0.9528);top:17px">LTDA (2)</span></div><div class="c c5" style="left:409px;width:98px"><span></span></div><div class="c c6" style="left:508px;width:97px"><span></span></div><div class="c c7" style="left:606px;width:89px"><span></span></div><div class="c c8" style="left:696px;width:24px"><span>0</span></div><div class="c c9" style="left:721px;width:24px"></div><div class="c c10" style="left:746px;width:24px"></div><div class="c c11" style="left:771px;width:24px"></div><div class="c c12" style="left:796px;width:24px"></div><div class="c c13" style="left:821px;width:24px"></div><div class="c c14" style="left:846px;width:19px"></div></div><div class="r" style="top:217px;height:19px"><div class="ind"></div><div class="c c0" style="left:27px;width:24px"><svg class="ic" style="left:5px;top:1px" width="13.5" height="15.5" viewBox="0 0 14 16"><use href="#i-doc"/></svg></div><div class="c c1" style="left:52px;width:24px"></div><div class="c c2" style="left:77px;width:24px"></div><div class="c c3" style="left:102px;width:74px"><span>80</span></div><div class="c c4" style="left:177px;width:231px"><span style="transform:scaleX(0.9179)">WILVALE DE RIGO S/A</span></div><div class="c c5" style="left:409px;width:98px"><span></span></div><div class="c c6" style="left:508px;width:97px"><span></span></div><div class="c c7" style="left:606px;width:89px"><span></span></div><div class="c c8" style="left:696px;width:24px"><span>0</span></div><div class="c c9" style="left:721px;width:24px"></div><div class="c c10" style="left:746px;width:24px"></div><div class="c c11" style="left:771px;width:24px"></div><div class="c c12" style="left:796px;width:24px"></div><div class="c c13" style="left:821px;width:24px"></div><div class="c c14" style="left:846px;width:19px"></div></div><div class="r dbl" style="top:236px;height:31px"><div class="ind"></div><div class="c c0" style="left:27px;width:24px"><svg class="ic" style="left:5px;top:1px" width="13.5" height="15.5" viewBox="0 0 14 16"><use href="#i-doc"/></svg></div><div class="c c1" style="left:52px;width:24px"></div><div class="c c2" style="left:77px;width:24px"></div><div class="c c3" style="left:102px;width:74px"><span>81</span></div><div class="c c4" style="left:177px;width:231px"><span style="transform:scaleX(0.9064);top:4px">CRISTALINA COMERCIO DE PRODUTOS</span><span style="transform:scaleX(0.9112);top:17px">OPTICOS</span></div><div class="c c5" style="left:409px;width:98px"><span></span></div><div class="c c6" style="left:508px;width:97px"><span></span></div><div class="c c7" style="left:606px;width:89px"><span></span></div><div class="c c8" style="left:696px;width:24px"><span>0</span></div><div class="c c9" style="left:721px;width:24px"></div><div class="c c10" style="left:746px;width:24px"></div><div class="c c11" style="left:771px;width:24px"></div><div class="c c12" style="left:796px;width:24px"></div><div class="c c13" style="left:821px;width:24px"></div><div class="c c14" style="left:846px;width:19px"></div></div><div class="r" style="top:267px;height:19px"><div class="ind"></div><div class="c c0" style="left:27px;width:24px"><svg class="ic" style="left:3px;top:1px" width="16" height="16" viewBox="-0.07 0.2 16 16"><use href="#i-info"/></svg></div><div class="c c1" style="left:52px;width:24px"></div><div class="c c2" style="left:77px;width:24px"></div><div class="c c3" style="left:102px;width:74px"><span>82</span></div><div class="c c4" style="left:177px;width:231px"><span style="transform:scaleX(0.9262)">LAJEADO (2)</span></div><div class="c c5" style="left:409px;width:98px"><span></span></div><div class="c c6" style="left:508px;width:97px"><span></span></div><div class="c c7" style="left:606px;width:89px"><span></span></div><div class="c c8" style="left:696px;width:24px"><span>0</span></div><div class="c c9" style="left:721px;width:24px"></div><div class="c c10" style="left:746px;width:24px"></div><div class="c c11" style="left:771px;width:24px"></div><div class="c c12" style="left:796px;width:24px"></div><div class="c c13" style="left:821px;width:24px"></div><div class="c c14" style="left:846px;width:19px"></div></div><div class="r" style="top:286px;height:19px"><div class="ind"></div><div class="c c0" style="left:27px;width:24px"><svg class="ic" style="left:3px;top:1px" width="16" height="16" viewBox="-0.07 0.2 16 16"><use href="#i-info"/></svg></div><div class="c c1" style="left:52px;width:24px"></div><div class="c c2" style="left:77px;width:24px"></div><div class="c c3" style="left:102px;width:74px"><span>83</span></div><div class="c c4" style="left:177px;width:231px"><span style="transform:scaleX(0.9262)">LAJEADO (2)</span></div><div class="c c5" style="left:409px;width:98px"><span></span></div><div class="c c6" style="left:508px;width:97px"><span></span></div><div class="c c7" style="left:606px;width:89px"><span></span></div><div class="c c8" style="left:696px;width:24px"><span>0</span></div><div class="c c9" style="left:721px;width:24px"></div><div class="c c10" style="left:746px;width:24px"></div><div class="c c11" style="left:771px;width:24px"></div><div class="c c12" style="left:796px;width:24px"></div><div class="c c13" style="left:821px;width:24px"></div><div class="c c14" style="left:846px;width:19px"></div></div><div class="r" style="top:305px;height:19px"><div class="ind"></div><div class="c c0" style="left:27px;width:24px"><svg class="ic" style="left:5px;top:1px" width="13.5" height="15.5" viewBox="0 0 14 16"><use href="#i-doc"/></svg></div><div class="c c1" style="left:52px;width:24px"></div><div class="c c2" style="left:77px;width:24px"></div><div class="c c3" style="left:102px;width:74px"><span>85</span></div><div class="c c4" style="left:177px;width:231px"><span style="transform:scaleX(0.9341)">OPTOTAL HOYA LTDA (108)</span></div><div class="c c5" style="left:409px;width:98px"><span></span></div><div class="c c6" style="left:508px;width:97px"><span></span></div><div class="c c7" style="left:606px;width:89px"><span></span></div><div class="c c8" style="left:696px;width:24px"><span>0</span></div><div class="c c9" style="left:721px;width:24px"></div><div class="c c10" style="left:746px;width:24px"></div><div class="c c11" style="left:771px;width:24px"></div><div class="c c12" style="left:796px;width:24px"></div><div class="c c13" style="left:821px;width:24px"></div><div class="c c14" style="left:846px;width:19px"></div></div><div class="r" style="top:324px;height:19px"><div class="ind"></div><div class="c c0" style="left:27px;width:24px"><svg class="ic" style="left:5px;top:1px" width="13.5" height="15.5" viewBox="0 0 14 16"><use href="#i-doc"/></svg></div><div class="c c1" style="left:52px;width:24px"></div><div class="c c2" style="left:77px;width:24px"></div><div class="c c3" style="left:102px;width:74px"><span>89</span></div><div class="c c4" style="left:177px;width:231px"><span style="transform:scaleX(0.8979)">CEDITOP PRODUTOS OPTICOS LTDA</span></div><div class="c c5" style="left:409px;width:98px"><span></span></div><div class="c c6" style="left:508px;width:97px"><span></span></div><div class="c c7" style="left:606px;width:89px"><span></span></div><div class="c c8" style="left:696px;width:24px"><span>0</span></div><div class="c c9" style="left:721px;width:24px"></div><div class="c c10" style="left:746px;width:24px"></div><div class="c c11" style="left:771px;width:24px"></div><div class="c c12" style="left:796px;width:24px"></div><div class="c c13" style="left:821px;width:24px"></div><div class="c c14" style="left:846px;width:19px"></div></div><div class="r" style="top:343px;height:19px"><div class="ind"></div><div class="c c0" style="left:27px;width:24px"><svg class="ic" style="left:3px;top:1px" width="16" height="16" viewBox="-0.07 0.2 16 16"><use href="#i-info"/></svg></div><div class="c c1" style="left:52px;width:24px"></div><div class="c c2" style="left:77px;width:24px"></div><div class="c c3" style="left:102px;width:74px"><span>100</span></div><div class="c c4" style="left:177px;width:231px"><span style="transform:scaleX(0.9424)">SANTA CRUZ 02 (3)</span></div><div class="c c5" style="left:409px;width:98px"><span></span></div><div class="c c6" style="left:508px;width:97px"><span></span></div><div class="c c7" style="left:606px;width:89px"><span></span></div><div class="c c8" style="left:696px;width:24px"><span>0</span></div><div class="c c9" style="left:721px;width:24px"></div><div class="c c10" style="left:746px;width:24px"></div><div class="c c11" style="left:771px;width:24px"></div><div class="c c12" style="left:796px;width:24px"></div><div class="c c13" style="left:821px;width:24px"></div><div class="c c14" style="left:846px;width:19px"></div></div><div class="r" style="top:362px;height:19px"><div class="ind"></div><div class="c c0" style="left:27px;width:24px"><svg class="ic" style="left:3px;top:1px" width="16" height="16" viewBox="-0.07 0.2 16 16"><use href="#i-info"/></svg></div><div class="c c1" style="left:52px;width:24px"></div><div class="c c2" style="left:77px;width:24px"></div><div class="c c3" style="left:102px;width:74px"><span>101</span></div><div class="c c4" style="left:177px;width:231px"><span style="transform:scaleX(0.9254)">VENANCIO AIRES (4)</span></div><div class="c c5" style="left:409px;width:98px"><span></span></div><div class="c c6" style="left:508px;width:97px"><span></span></div><div class="c c7" style="left:606px;width:89px"><span></span></div><div class="c c8" style="left:696px;width:24px"><span>0</span></div><div class="c c9" style="left:721px;width:24px"></div><div class="c c10" style="left:746px;width:24px"></div><div class="c c11" style="left:771px;width:24px"></div><div class="c c12" style="left:796px;width:24px"></div><div class="c c13" style="left:821px;width:24px"></div><div class="c c14" style="left:846px;width:19px"></div></div><div class="r pink" style="top:381px;height:19px"><div class="ind"></div><div class="c c0" style="left:27px;width:24px"><svg class="ic" style="left:5px;top:1px" width="13.5" height="15.5" viewBox="0 0 14 16"><use href="#i-doc"/></svg></div><div class="c c1" style="left:52px;width:24px"></div><div class="c c2" style="left:77px;width:24px"></div><div class="c c3" style="left:102px;width:74px"><span>102</span></div><div class="c c4" style="left:177px;width:231px"><span style="transform:scaleX(0.9036)">OPTOTAL HOYA LTDA</span></div><div class="c c5" style="left:409px;width:98px"><span></span></div><div class="c c6" style="left:508px;width:97px"><span></span></div><div class="c c7" style="left:606px;width:89px"><span></span></div><div class="c c8" style="left:696px;width:24px"><span>0</span></div><div class="c c9" style="left:721px;width:24px"></div><div class="c c10" style="left:746px;width:24px"></div><div class="c c11" style="left:771px;width:24px"></div><div class="c c12" style="left:796px;width:24px"></div><div class="c c13" style="left:821px;width:24px"></div><div class="c c14" style="left:846px;width:19px"></div></div><div class="r" style="top:400px;height:19px"><div class="ind"></div><div class="c c0" style="left:27px;width:24px"><svg class="ic" style="left:3px;top:1px" width="16" height="16" viewBox="-0.07 0.2 16 16"><use href="#i-info"/></svg></div><div class="c c1" style="left:52px;width:24px"></div><div class="c c2" style="left:77px;width:24px"></div><div class="c c3" style="left:102px;width:74px"><span>103</span></div><div class="c c4" style="left:177px;width:231px"><span style="transform:scaleX(0.9262)">LAJEADO (2)</span></div><div class="c c5" style="left:409px;width:98px"><span></span></div><div class="c c6" style="left:508px;width:97px"><span></span></div><div class="c c7" style="left:606px;width:89px"><span></span></div><div class="c c8" style="left:696px;width:24px"><span>0</span></div><div class="c c9" style="left:721px;width:24px"></div><div class="c c10" style="left:746px;width:24px"></div><div class="c c11" style="left:771px;width:24px"></div><div class="c c12" style="left:796px;width:24px"></div><div class="c c13" style="left:821px;width:24px"></div><div class="c c14" style="left:846px;width:19px"></div></div><div class="r" style="top:419px;height:19px"><div class="ind"></div><div class="c c0" style="left:27px;width:24px"><svg class="ic" style="left:3px;top:1px" width="16" height="16" viewBox="-0.07 0.2 16 16"><use href="#i-info"/></svg></div><div class="c c1" style="left:52px;width:24px"></div><div class="c c2" style="left:77px;width:24px"></div><div class="c c3" style="left:102px;width:74px"><span>105</span></div><div class="c c4" style="left:177px;width:231px"><span style="transform:scaleX(0.9262)">LAJEADO (2)</span></div><div class="c c5" style="left:409px;width:98px"><span></span></div><div class="c c6" style="left:508px;width:97px"><span></span></div><div class="c c7" style="left:606px;width:89px"><span></span></div><div class="c c8" style="left:696px;width:24px"><span>0</span></div><div class="c c9" style="left:721px;width:24px"></div><div class="c c10" style="left:746px;width:24px"></div><div class="c c11" style="left:771px;width:24px"></div><div class="c c12" style="left:796px;width:24px"></div><div class="c c13" style="left:821px;width:24px"></div><div class="c c14" style="left:846px;width:19px"></div></div><div class="r" style="top:438px;height:19px"><div class="ind"></div><div class="c c0" style="left:27px;width:24px"><svg class="ic" style="left:3px;top:1px" width="16" height="16" viewBox="-0.07 0.2 16 16"><use href="#i-info"/></svg></div><div class="c c1" style="left:52px;width:24px"></div><div class="c c2" style="left:77px;width:24px"></div><div class="c c3" style="left:102px;width:74px"><span>107</span></div><div class="c c4" style="left:177px;width:231px"><span style="transform:scaleX(0.9262)">LAJEADO (2)</span></div><div class="c c5" style="left:409px;width:98px"><span></span></div><div class="c c6" style="left:508px;width:97px"><span></span></div><div class="c c7" style="left:606px;width:89px"><span></span></div><div class="c c8" style="left:696px;width:24px"><span>0</span></div><div class="c c9" style="left:721px;width:24px"></div><div class="c c10" style="left:746px;width:24px"></div><div class="c c11" style="left:771px;width:24px"></div><div class="c c12" style="left:796px;width:24px"></div><div class="c c13" style="left:821px;width:24px"></div><div class="c c14" style="left:846px;width:19px"></div></div><div class="r" style="top:457px;height:19px"><div class="ind"></div><div class="c c0" style="left:27px;width:24px"><svg class="ic" style="left:3px;top:1px" width="16" height="16" viewBox="-0.07 0.2 16 16"><use href="#i-info"/></svg></div><div class="c c1" style="left:52px;width:24px"></div><div class="c c2" style="left:77px;width:24px"></div><div class="c c3" style="left:102px;width:74px"><span>111</span></div><div class="c c4" style="left:177px;width:231px"><span style="transform:scaleX(0.9254)">VENANCIO AIRES (4)</span></div><div class="c c5" style="left:409px;width:98px"><span></span></div><div class="c c6" style="left:508px;width:97px"><span></span></div><div class="c c7" style="left:606px;width:89px"><span></span></div><div class="c c8" style="left:696px;width:24px"><span>0</span></div><div class="c c9" style="left:721px;width:24px"></div><div class="c c10" style="left:746px;width:24px"></div><div class="c c11" style="left:771px;width:24px"></div><div class="c c12" style="left:796px;width:24px"></div><div class="c c13" style="left:821px;width:24px"></div><div class="c c14" style="left:846px;width:19px"></div></div><div class="r" style="top:476px;height:19px"><div class="ind"></div><div class="c c0" style="left:27px;width:24px"><svg class="ic" style="left:3px;top:1px" width="16" height="16" viewBox="-0.07 0.2 16 16"><use href="#i-info"/></svg></div><div class="c c1" style="left:52px;width:24px"></div><div class="c c2" style="left:77px;width:24px"></div><div class="c c3" style="left:102px;width:74px"><span>112</span></div><div class="c c4" style="left:177px;width:231px"><span style="transform:scaleX(0.9262)">LAJEADO (2)</span></div><div class="c c5" style="left:409px;width:98px"><span></span></div><div class="c c6" style="left:508px;width:97px"><span></span></div><div class="c c7" style="left:606px;width:89px"><span></span></div><div class="c c8" style="left:696px;width:24px"><span>0</span></div><div class="c c9" style="left:721px;width:24px"></div><div class="c c10" style="left:746px;width:24px"></div><div class="c c11" style="left:771px;width:24px"></div><div class="c c12" style="left:796px;width:24px"></div><div class="c c13" style="left:821px;width:24px"></div><div class="c c14" style="left:846px;width:19px"></div></div><div class="r" style="top:495px;height:19px"><div class="ind"></div><div class="c c0" style="left:27px;width:24px"><svg class="ic" style="left:5px;top:1px" width="13.5" height="15.5" viewBox="0 0 14 16"><use href="#i-doc"/></svg></div><div class="c c1" style="left:52px;width:24px"></div><div class="c c2" style="left:77px;width:24px"></div><div class="c c3" style="left:102px;width:74px"><span>127</span></div><div class="c c4" style="left:177px;width:231px"><span style="transform:scaleX(0.911)">HTK LENTES OFTALMICAS SA (169)</span></div><div class="c c5" style="left:409px;width:98px"><span></span></div><div class="c c6" style="left:508px;width:97px"><span></span></div><div class="c c7" style="left:606px;width:89px"><span></span></div><div class="c c8" style="left:696px;width:24px"><span>1</span></div><div class="c c9" style="left:721px;width:24px"></div><div class="c c10" style="left:746px;width:24px"></div><div class="c c11" style="left:771px;width:24px"></div><div class="c c12" style="left:796px;width:24px"></div><div class="c c13" style="left:821px;width:24px"></div><div class="c c14" style="left:846px;width:19px"></div></div><div class="r" style="top:514px;height:19px"><div class="ind"></div><div class="c c0" style="left:27px;width:24px"><svg class="ic" style="left:3px;top:1px" width="16" height="16" viewBox="-0.07 0.2 16 16"><use href="#i-info"/></svg></div><div class="c c1" style="left:52px;width:24px"></div><div class="c c2" style="left:77px;width:24px"></div><div class="c c3" style="left:102px;width:74px"><span>130</span></div><div class="c c4" style="left:177px;width:231px"><span style="transform:scaleX(0.911)">HTK LENTES OFTALMICAS SA (169)</span></div><div class="c c5" style="left:409px;width:98px"><span></span></div><div class="c c6" style="left:508px;width:97px"><span></span></div><div class="c c7" style="left:606px;width:89px"><span></span></div><div class="c c8" style="left:696px;width:24px"><span>0</span></div><div class="c c9" style="left:721px;width:24px"></div><div class="c c10" style="left:746px;width:24px"></div><div class="c c11" style="left:771px;width:24px"></div><div class="c c12" style="left:796px;width:24px"></div><div class="c c13" style="left:821px;width:24px"></div><div class="c c14" style="left:846px;width:19px"></div></div><div class="r" style="top:533px;height:19px"><div class="ind"></div><div class="c c0" style="left:27px;width:24px"><svg class="ic" style="left:3px;top:1px" width="16" height="16" viewBox="-0.07 0.2 16 16"><use href="#i-info"/></svg></div><div class="c c1" style="left:52px;width:24px"></div><div class="c c2" style="left:77px;width:24px"></div><div class="c c3" style="left:102px;width:74px"><span>132</span></div><div class="c c4" style="left:177px;width:231px"><span style="transform:scaleX(0.911)">HTK LENTES OFTALMICAS SA (169)</span></div><div class="c c5" style="left:409px;width:98px"><span></span></div><div class="c c6" style="left:508px;width:97px"><span></span></div><div class="c c7" style="left:606px;width:89px"><span></span></div><div class="c c8" style="left:696px;width:24px"><span>0</span></div><div class="c c9" style="left:721px;width:24px"></div><div class="c c10" style="left:746px;width:24px"></div><div class="c c11" style="left:771px;width:24px"></div><div class="c c12" style="left:796px;width:24px"></div><div class="c c13" style="left:821px;width:24px"></div><div class="c c14" style="left:846px;width:19px"></div></div><div class="r" style="top:552px;height:19px"><div class="ind"></div><div class="c c0" style="left:27px;width:24px"><svg class="ic" style="left:3px;top:1px" width="16" height="16" viewBox="-0.07 0.2 16 16"><use href="#i-info"/></svg></div><div class="c c1" style="left:52px;width:24px"></div><div class="c c2" style="left:77px;width:24px"></div><div class="c c3" style="left:102px;width:74px"><span>136</span></div><div class="c c4" style="left:177px;width:231px"><span style="transform:scaleX(0.9262)">LAJEADO (2)</span></div><div class="c c5" style="left:409px;width:98px"><span></span></div><div class="c c6" style="left:508px;width:97px"><span></span></div><div class="c c7" style="left:606px;width:89px"><span></span></div><div class="c c8" style="left:696px;width:24px"><span>0</span></div><div class="c c9" style="left:721px;width:24px"></div><div class="c c10" style="left:746px;width:24px"></div><div class="c c11" style="left:771px;width:24px"></div><div class="c c12" style="left:796px;width:24px"></div><div class="c c13" style="left:821px;width:24px"></div><div class="c c14" style="left:846px;width:19px"></div></div><div class="r" style="top:571px;height:19px"><div class="ind"></div><div class="c c0" style="left:27px;width:24px"><svg class="ic" style="left:3px;top:1px" width="16" height="16" viewBox="-0.07 0.2 16 16"><use href="#i-info"/></svg></div><div class="c c1" style="left:52px;width:24px"></div><div class="c c2" style="left:77px;width:24px"></div><div class="c c3" style="left:102px;width:74px"><span>137</span></div><div class="c c4" style="left:177px;width:231px"><span style="transform:scaleX(0.9424)">SANTA CRUZ 02 (3)</span></div><div class="c c5" style="left:409px;width:98px"><span></span></div><div class="c c6" style="left:508px;width:97px"><span></span></div><div class="c c7" style="left:606px;width:89px"><span></span></div><div class="c c8" style="left:696px;width:24px"><span>0</span></div><div class="c c9" style="left:721px;width:24px"></div><div class="c c10" style="left:746px;width:24px"></div><div class="c c11" style="left:771px;width:24px"></div><div class="c c12" style="left:796px;width:24px"></div><div class="c c13" style="left:821px;width:24px"></div><div class="c c14" style="left:846px;width:19px"></div></div><div class="r" style="top:590px;height:19px"><div class="ind"></div><div class="c c0" style="left:27px;width:24px"><svg class="ic" style="left:5px;top:1px" width="13.5" height="15.5" viewBox="0 0 14 16"><use href="#i-doc"/></svg></div><div class="c c1" style="left:52px;width:24px"></div><div class="c c2" style="left:77px;width:24px"></div><div class="c c3" style="left:102px;width:74px"><span>139</span></div><div class="c c4" style="left:177px;width:231px"><span style="transform:scaleX(0.911)">HTK LENTES OFTALMICAS SA (169)</span></div><div class="c c5" style="left:409px;width:98px"><span></span></div><div class="c c6" style="left:508px;width:97px"><span></span></div><div class="c c7" style="left:606px;width:89px"><span></span></div><div class="c c8" style="left:696px;width:24px"><span>0</span></div><div class="c c9" style="left:721px;width:24px"></div><div class="c c10" style="left:746px;width:24px"></div><div class="c c11" style="left:771px;width:24px"></div><div class="c c12" style="left:796px;width:24px"></div><div class="c c13" style="left:821px;width:24px"></div><div class="c c14" style="left:846px;width:19px"></div></div><div class="r dbl" style="top:609px;height:31px"><div class="ind"></div><div class="c c0" style="left:27px;width:24px"><svg class="ic" style="left:5px;top:1px" width="13.5" height="15.5" viewBox="0 0 14 16"><use href="#i-doc"/></svg></div><div class="c c1" style="left:52px;width:24px"></div><div class="c c2" style="left:77px;width:24px"></div><div class="c c3" style="left:102px;width:74px"><span>142</span></div><div class="c c4" style="left:177px;width:231px"><span style="transform:scaleX(0.905);top:4px">KENERSON IND E COM DE PROD OPTICOS</span><span style="transform:scaleX(0.9528);top:17px">LTDA (1)</span></div><div class="c c5" style="left:409px;width:98px"><span></span></div><div class="c c6" style="left:508px;width:97px"><span></span></div><div class="c c7" style="left:606px;width:89px"><span></span></div><div class="c c8" style="left:696px;width:24px"><span>0</span></div><div class="c c9" style="left:721px;width:24px"></div><div class="c c10" style="left:746px;width:24px"></div><div class="c c11" style="left:771px;width:24px"></div><div class="c c12" style="left:796px;width:24px"></div><div class="c c13" style="left:821px;width:24px"></div><div class="c c14" style="left:846px;width:19px"></div></div><div class="r dbl" style="top:640px;height:31px"><div class="ind"></div><div class="c c0" style="left:27px;width:24px"><svg class="ic" style="left:5px;top:1px" width="13.5" height="15.5" viewBox="0 0 14 16"><use href="#i-doc"/></svg></div><div class="c c1" style="left:52px;width:24px"></div><div class="c c2" style="left:77px;width:24px"></div><div class="c c3" style="left:102px;width:74px"><span>143</span></div><div class="c c4" style="left:177px;width:231px"><span style="transform:scaleX(0.905);top:4px">H. VISION COMERCIO DE PRODUTOS OTICOS</span><span style="transform:scaleX(1);top:17px">-</span></div><div class="c c5" style="left:409px;width:98px"><span></span></div><div class="c c6" style="left:508px;width:97px"><span></span></div><div class="c c7" style="left:606px;width:89px"><span></span></div><div class="c c8" style="left:696px;width:24px"><span>0</span></div><div class="c c9" style="left:721px;width:24px"></div><div class="c c10" style="left:746px;width:24px"></div><div class="c c11" style="left:771px;width:24px"></div><div class="c c12" style="left:796px;width:24px"></div><div class="c c13" style="left:821px;width:24px"></div><div class="c c14" style="left:846px;width:19px"></div></div><div class="r" style="top:671px;height:19px"><div class="ind"></div><div class="c c0" style="left:27px;width:24px"><svg class="ic" style="left:3px;top:1px" width="16" height="16" viewBox="-0.07 0.2 16 16"><use href="#i-info"/></svg></div><div class="c c1" style="left:52px;width:24px"></div><div class="c c2" style="left:77px;width:24px"></div><div class="c c3" style="left:102px;width:74px"><span>150</span></div><div class="c c4" style="left:177px;width:231px"><span style="transform:scaleX(0.9424)">SANTA CRUZ 02 (3)</span></div><div class="c c5" style="left:409px;width:98px"><span></span></div><div class="c c6" style="left:508px;width:97px"><span></span></div><div class="c c7" style="left:606px;width:89px"><span></span></div><div class="c c8" style="left:696px;width:24px"><span>0</span></div><div class="c c9" style="left:721px;width:24px"></div><div class="c c10" style="left:746px;width:24px"></div><div class="c c11" style="left:771px;width:24px"></div><div class="c c12" style="left:796px;width:24px"></div><div class="c c13" style="left:821px;width:24px"></div><div class="c c14" style="left:846px;width:19px"></div></div><div class="r" style="top:690px;height:19px"><div class="ind"></div><div class="c c0" style="left:27px;width:24px"><svg class="ic" style="left:3px;top:1px" width="16" height="16" viewBox="-0.07 0.2 16 16"><use href="#i-info"/></svg></div><div class="c c1" style="left:52px;width:24px"></div><div class="c c2" style="left:77px;width:24px"></div><div class="c c3" style="left:102px;width:74px"><span>157</span></div><div class="c c4" style="left:177px;width:231px"><span style="transform:scaleX(0.9254)">VENANCIO AIRES (4)</span></div><div class="c c5" style="left:409px;width:98px"><span></span></div><div class="c c6" style="left:508px;width:97px"><span></span></div><div class="c c7" style="left:606px;width:89px"><span></span></div><div class="c c8" style="left:696px;width:24px"><span>0</span></div><div class="c c9" style="left:721px;width:24px"></div><div class="c c10" style="left:746px;width:24px"></div><div class="c c11" style="left:771px;width:24px"></div><div class="c c12" style="left:796px;width:24px"></div><div class="c c13" style="left:821px;width:24px"></div><div class="c c14" style="left:846px;width:19px"></div></div><div class="r" style="top:709px;height:19px"><div class="ind"></div><div class="c c0" style="left:27px;width:24px"><svg class="ic" style="left:3px;top:1px" width="16" height="16" viewBox="-0.07 0.2 16 16"><use href="#i-info"/></svg></div><div class="c c1" style="left:52px;width:24px"></div><div class="c c2" style="left:77px;width:24px"></div><div class="c c3" style="left:102px;width:74px"><span>159</span></div><div class="c c4" style="left:177px;width:231px"><span style="transform:scaleX(0.9262)">LAJEADO (2)</span></div><div class="c c5" style="left:409px;width:98px"><span></span></div><div class="c c6" style="left:508px;width:97px"><span></span></div><div class="c c7" style="left:606px;width:89px"><span></span></div><div class="c c8" style="left:696px;width:24px"><span>0</span></div><div class="c c9" style="left:721px;width:24px"></div><div class="c c10" style="left:746px;width:24px"></div><div class="c c11" style="left:771px;width:24px"></div><div class="c c12" style="left:796px;width:24px"></div><div class="c c13" style="left:821px;width:24px"></div><div class="c c14" style="left:846px;width:19px"></div></div><div class="r" style="top:728px;height:19px"><div class="ind"></div><div class="c c0" style="left:27px;width:24px"><svg class="ic" style="left:3px;top:1px" width="16" height="16" viewBox="-0.07 0.2 16 16"><use href="#i-info"/></svg></div><div class="c c1" style="left:52px;width:24px"></div><div class="c c2" style="left:77px;width:24px"></div><div class="c c3" style="left:102px;width:74px"><span>163</span></div><div class="c c4" style="left:177px;width:231px"><span style="transform:scaleX(0.9424)">SANTA CRUZ 02 (3)</span></div><div class="c c5" style="left:409px;width:98px"><span></span></div><div class="c c6" style="left:508px;width:97px"><span></span></div><div class="c c7" style="left:606px;width:89px"><span></span></div><div class="c c8" style="left:696px;width:24px"><span>0</span></div><div class="c c9" style="left:721px;width:24px"></div><div class="c c10" style="left:746px;width:24px"></div><div class="c c11" style="left:771px;width:24px"></div><div class="c c12" style="left:796px;width:24px"></div><div class="c c13" style="left:821px;width:24px"></div><div class="c c14" style="left:846px;width:19px"></div></div><div class="r" style="top:747px;height:19px"><div class="ind"></div><div class="c c0" style="left:27px;width:24px"><svg class="ic" style="left:3px;top:1px" width="16" height="16" viewBox="-0.07 0.2 16 16"><use href="#i-info"/></svg></div><div class="c c1" style="left:52px;width:24px"></div><div class="c c2" style="left:77px;width:24px"></div><div class="c c3" style="left:102px;width:74px"><span>164</span></div><div class="c c4" style="left:177px;width:231px"><span style="transform:scaleX(0.9262)">LAJEADO (2)</span></div><div class="c c5" style="left:409px;width:98px"><span></span></div><div class="c c6" style="left:508px;width:97px"><span></span></div><div class="c c7" style="left:606px;width:89px"><span></span></div><div class="c c8" style="left:696px;width:24px"><span>0</span></div><div class="c c9" style="left:721px;width:24px"></div><div class="c c10" style="left:746px;width:24px"></div><div class="c c11" style="left:771px;width:24px"></div><div class="c c12" style="left:796px;width:24px"></div><div class="c c13" style="left:821px;width:24px"></div><div class="c c14" style="left:846px;width:19px"></div></div></div><div id="gfoot"><div class="find"></div><div class="fbox" style="left:102px;width:74px"><span>37</span></div><div class="fbox" style="left:606px;width:89px"><span>11.148,23</span></div></div></div>
<div id="statusbg"></div><div id="status"><span>Exibindo somente a transações com filtro personalizado.</span></div>
<div class="menu" style="left:531px;top:314px;width:322px;height:694px"><div class="m" style="left:3px;top:3px;width:316px"><svg style="position:absolute;left:2.5px;top:2px" width="17" height="17" viewBox="0 0 17 17"><use href="#m-plus"/></svg><span class="t" style="letter-spacing:-0.049px">Inserir pedido</span></div><div class="m" style="left:3px;top:24px;width:316px"><svg style="position:absolute;left:3.5px;top:2px" width="16" height="18" viewBox="0 0 17 19"><use href="#m-edit"/></svg><span class="t" style="letter-spacing:-0.162px">Editar pedido</span></div><div class="m" style="left:3px;top:45px;width:316px"><svg style="position:absolute;left:2px;top:2px" width="17" height="17" viewBox="0 0 17 17"><use href="#m-x"/></svg><span class="t" style="letter-spacing:-0.131px">Excluir pedido</span></div><div class="mh" style="left:3px;top:66px;width:316px"><i style="top:0"></i><b style="letter-spacing:-0.336px">Aprovação</b><i style="top:23px"></i></div><div class="m dis" style="left:3px;top:91px;width:316px"><svg style="position:absolute;left:2.5px;top:2px" width="17" height="17" viewBox="0 0 17 17"><use href="#m-dn-g"/></svg><span class="t" style="letter-spacing:-0.039px">Aprovar pedido</span></div><div class="m dis" style="left:3px;top:112px;width:316px"><svg style="position:absolute;left:2.5px;top:2px" width="17" height="17" viewBox="0 0 17 17"><use href="#m-up-g"/></svg><span class="t" style="letter-spacing:-0.169px">Cancelar aprovação de pedido</span></div><div class="mh" style="left:3px;top:133px;width:316px"><i style="top:0"></i><b style="letter-spacing:-0.16px">Encerramento</b><i style="top:23px"></i></div><div class="m dis" style="left:3px;top:158px;width:316px"><svg style="position:absolute;left:2.5px;top:2px" width="17" height="17" viewBox="0 0 17 17"><use href="#m-dn-g"/></svg><span class="t" style="letter-spacing:-0.251px">Encerrar pedido</span></div><div class="m" style="left:3px;top:179px;width:316px"><svg style="position:absolute;left:2.5px;top:2px" width="17" height="17" viewBox="0 0 17 17"><use href="#m-up"/></svg><span class="t" style="letter-spacing:-0.129px">Cancelar encerramento de pedido</span></div><div class="mh" style="left:3px;top:200px;width:316px"><i style="top:0"></i><b style="letter-spacing:-0.499px">Expedição</b><i style="top:23px"></i></div><div class="m" style="left:3px;top:225px;width:316px"><svg style="position:absolute;left:2px;top:2px" width="17" height="17" viewBox="0 0 17 17"><use href="#m-stamp"/></svg><span class="t" style="letter-spacing:-0.349px">Expedir</span></div><div class="m" style="left:3px;top:246px;width:316px"><svg style="position:absolute;left:2px;top:2px" width="17" height="17" viewBox="0 0 17 17"><use href="#m-x"/></svg><span class="t" style="letter-spacing:-0.229px">Cancelar expedição</span></div><div class="mh" style="left:3px;top:267px;width:316px"><i style="top:0"></i><b style="letter-spacing:-0.41px">Outras saídas de nota fiscal</b><i style="top:23px"></i></div><div class="m" style="left:3px;top:292px;width:316px"><svg style="position:absolute;left:2.5px;top:2px" width="17" height="17" viewBox="0 0 17 17"><use href="#m-plus"/></svg><span class="t" style="letter-spacing:-0.121px">Inserir nota fiscal de diferencial de alíquotas (saída)</span></div><div class="mh" style="left:3px;top:313px;width:316px"><i style="top:0"></i><b style="letter-spacing:-0.288px">Conferência</b><i style="top:23px"></i></div><div class="m" style="left:3px;top:338px;width:316px"><span class="t" style="letter-spacing:-0.152px">Conferência...</span></div><div class="m dis" style="left:3px;top:359px;width:316px"><span class="t" style="letter-spacing:-0.196px">Cancelar conferência</span></div><div class="mh" style="left:3px;top:380px;width:316px"><i style="top:0"></i><b style="letter-spacing:-0.372px">Financeiro</b><i style="top:23px"></i></div><div class="m" style="left:3px;top:405px;width:316px"><svg style="position:absolute;left:3.5px;top:2px" width="15" height="17" viewBox="0 0 16 18"><use href="#m-dollar"/></svg><span class="t" style="letter-spacing:-0.212px">Lançar no contas a receber</span></div><div class="m dis" style="left:3px;top:426px;width:316px"><svg style="position:absolute;left:2px;top:2px" width="17" height="17" viewBox="0 0 17 17"><use href="#m-x-g"/></svg><span class="t" style="letter-spacing:-0.152px">Remover lançamentos no contas a receber</span></div><div class="m" style="left:3px;top:447px;width:316px"><span class="t" style="letter-spacing:-0.245px">Mais</span><div class="arr" style="left:305px;top:7px"></div></div><div class="mh" style="left:3px;top:468px;width:316px"><i style="top:0"></i><b style="letter-spacing:-0.384px">Outras operações</b><i style="top:23px"></i></div><div class="m" style="left:3px;top:493px;width:316px"><span class="t" style="letter-spacing:-0.11px">Enviar pedido por email...</span><span class="k" style="left:278px">F3</span></div><div class="m" style="left:3px;top:514px;width:316px"><span class="t" style="letter-spacing:-0.322px">Outras</span><div class="arr" style="left:305px;top:7px"></div></div><div class="ms" style="left:15px;top:539px;width:292px"></div><div class="m" style="left:3px;top:545px;width:316px"><svg style="position:absolute;left:3px;top:3px" width="16" height="15" viewBox="0 0 17 16"><use href="#m-print"/></svg><span class="t" style="letter-spacing:0.184px">Imprimir orçamento</span><span class="k" style="left:278px">F6</span></div><div class="m" style="left:3px;top:566px;width:316px"><svg style="position:absolute;left:3px;top:3px" width="16" height="15" viewBox="0 0 17 16"><use href="#m-print"/></svg><span class="t" style="letter-spacing:0.141px">Imprimir orçamento (modelo 2)</span></div><div class="m dis" style="left:3px;top:587px;width:316px"><svg style="position:absolute;left:3px;top:3px" width="16" height="15" viewBox="0 0 17 16"><use href="#m-print-g"/></svg><span class="t" style="letter-spacing:0.227px">Imprimir pedido</span><span class="k" style="left:278px">F4</span></div><div class="ms" style="left:15px;top:612px;width:292px"></div><div class="m" style="left:3px;top:618px;width:316px"><svg style="position:absolute;left:4.5px;top:2.5px" width="14.5" height="16" viewBox="0 0 14 16"><use href="#i-doc"/></svg><span class="t" style="letter-spacing:-0.063px">Imprimir DANFE</span></div><div class="m hi" style="left:3px;top:639px;width:316px"><span class="t" style="letter-spacing:-0.245px">Mais</span><div class="arr" style="left:305px;top:7px"></div></div><div class="ms" style="left:15px;top:664px;width:292px"></div><div class="m" style="left:3px;top:670px;width:316px"><svg style="position:absolute;left:3px;top:3.5px" width="16" height="16" viewBox="0 0 16 16"><use href="#m-refresh"/></svg><span class="t" style="letter-spacing:-0.099px">Atualizar</span><span class="k" style="left:278px">F5</span></div></div>
<div class="menu" style="left:850px;top:836px;width:249px;height:204px"><div class="m" style="left:3px;top:3px;width:243px"><svg style="position:absolute;left:1.8px;top:1.8px" width="17.6" height="17.4" viewBox="0 0 18 18"><use href="#m-redarrow"/></svg><span class="t" style="letter-spacing:-0.156px">Forçar - Cancelar nota fiscal</span></div><div class="ms" style="left:15px;top:28px;width:219px"></div><div class="m" style="left:3px;top:34px;width:243px"><div class="ibtn"></div><svg style="position:absolute;left:3.5px;top:2px" width="16" height="18" viewBox="0 0 17 19"><use href="#m-edit"/></svg><div class="hib" style="left:22px;width:221px"></div><span class="t" style="color:#fff;letter-spacing:-0.131px">Emitir carta de correção eletrôncia</span></div><div class="m dis" style="left:3px;top:55px;width:243px"><svg style="position:absolute;left:3px;top:3px" width="16" height="15" viewBox="0 0 17 16"><use href="#m-print-g"/></svg><span class="t" style="letter-spacing:-0.029px">Imprimir carta de correção eletrônica</span></div><div class="ms" style="left:15px;top:80px;width:219px"></div><div class="m" style="left:3px;top:86px;width:243px"><span class="t" style="letter-spacing:-0.113px">Alterar numeração da nota fiscal...</span></div><div class="m" style="left:3px;top:107px;width:243px"><span class="t" style="letter-spacing:-0.029px">Complemento da NF...</span></div><div class="ms" style="left:15px;top:132px;width:219px"></div><div class="m" style="left:3px;top:138px;width:243px"><span class="t" style="letter-spacing:-0.061px">Enviar nota fiscal por e-mail</span></div><div class="m" style="left:3px;top:159px;width:243px"><span class="t" style="letter-spacing:-0.205px">Salvar nota fiscal para arquivo</span></div><div class="m" style="left:3px;top:180px;width:243px"><span class="t" style="letter-spacing:-0.255px">Enviar para o suporte Dataweb</span></div></div>
<svg width="0" height="0" style="position:absolute"><defs>
<radialGradient id="gBlue" cx="0.4" cy="0.3" r="0.8"><stop offset="0" stop-color="#5fb4ee"/><stop offset="0.6" stop-color="#1279c8"/><stop offset="1" stop-color="#0a4f94"/></radialGradient>
<radialGradient id="gRed" cx="0.4" cy="0.3" r="0.8"><stop offset="0" stop-color="#f06a6a"/><stop offset="0.6" stop-color="#d51820"/><stop offset="1" stop-color="#9a0a10"/></radialGradient>
<radialGradient id="gGray" cx="0.4" cy="0.3" r="0.8"><stop offset="0" stop-color="#d6d6d6"/><stop offset="0.7" stop-color="#b4b4b4"/><stop offset="1" stop-color="#9c9c9c"/></radialGradient>
<radialGradient id="gGreen" cx="0.4" cy="0.3" r="0.8"><stop offset="0" stop-color="#c6f06a"/><stop offset="0.6" stop-color="#7cc81a"/><stop offset="1" stop-color="#4c9a0a"/></radialGradient>
<linearGradient id="gOr" x1="0" y1="0" x2="0" y2="1"><stop offset="0" stop-color="#ffb43a"/><stop offset="1" stop-color="#f58a12"/></linearGradient>
<linearGradient id="gPage" x1="0" y1="0" x2="1" y2="1"><stop offset="0" stop-color="#ffffff"/><stop offset="1" stop-color="#dfe8f3"/></linearGradient>
<linearGradient id="dpg" x1="0" y1="0" x2="0.3" y2="1"><stop offset="0" stop-color="#ffffff"/><stop offset="0.7" stop-color="#f8f9fb"/><stop offset="1" stop-color="#e6e8ec"/></linearGradient>
<g id="docbig"><path d="M1 0.5 L18.2 0.5 L25.6 8 L25.6 31.6 L1 31.6Z" fill="#5a6e8c"/><path d="M0.5 0.5 L18 0.5 L25.2 7.8 L25.2 31 L0.5 31 Z" fill="url(#dpg)" stroke="#9cb6d4" stroke-width="0.9"/><path d="M25.4 8 L25.4 31.4 L1 31.4" fill="none" stroke="#60748e" stroke-width="0.9"/><path d="M18 0.7 L18 7.8 L25 7.8Z" fill="#fff" stroke="#9cb6d4" stroke-width="0.8"/><path d="M18.2 1.2 L24.8 7.8" stroke="#b8cce4" stroke-width="0.9"/><path d="M4 4.8h6.4M4 7.6h4.6M14.8 7.6h4.6" stroke="#3c4654" stroke-width="1.3"/><path d="M4 5.2h6M4.4 8.2h4M15 8.2h4" stroke="#8aa0c0" stroke-width="0.6"/><path d="M4 10.6h6.8M14.8 10.6h6.8M4 12.6h6.8M14.8 12.6h6.8" stroke="#a8c0dc" stroke-width="0.8"/><rect x="4.4" y="15.4" width="17" height="8.2" fill="#fbfbfb" stroke="#98b2d2" stroke-width="0.9"/><rect x="4.8" y="15.8" width="16.2" height="2.6" fill="#c4d4e8"/><path d="M4.4 18.6 H21.4 M11.2 15.4 V23.6 M16.2 15.4 V23.6" stroke="#98b2d2" stroke-width="0.9"/><path d="M4 25.6h6.8M4 27.6h6.8" stroke="#a8c0dc" stroke-width="0.8"/></g>
<symbol id="i-info" viewBox="0 0 15 15"><defs><linearGradient id="iig" gradientUnits="userSpaceOnUse" x1="10.5" y1="0.5" x2="4.5" y2="14.5"><stop offset="0" stop-color="#b0f0ff"/><stop offset="0.28" stop-color="#30b0ea"/><stop offset="0.58" stop-color="#0a7ccc"/><stop offset="1" stop-color="#003a94"/></linearGradient></defs><circle cx="7.5" cy="7.5" r="6.95" fill="url(#iig)"/><circle cx="7.5" cy="7.5" r="6.7" fill="none" stroke="#0a5cb0" stroke-opacity="0.5" stroke-width="0.6"/><rect x="6.75" y="5.7" width="1.5" height="6" fill="#c4dcf2"/><rect x="6.75" y="3.3" width="1.5" height="1.2" fill="#d4e8f8"/></symbol>
<symbol id="i-doc" viewBox="0 0 14 16"><defs><linearGradient id="dsh" x1="0" y1="0" x2="1" y2="0"><stop offset="0" stop-color="#4a4a4a"/><stop offset="1" stop-color="#bcbcbc"/></linearGradient></defs><path d="M10 0.5 L11.6 1.2 L13 13 L12.4 14Z" fill="#c4c4c4"/><path d="M0.9 14.2 L12.3 14 L12.2 15 L1.4 15.6Z" fill="url(#dsh)"/><path d="M0.8 1.4 Q0.8 0.9 1.4 0.85 L10.6 0.3 Q11.4 0.3 11.4 0.9 L12.2 13.8 Q12.2 14.4 11.6 14.4 L1.4 14.7 Q0.8 14.7 0.8 14.1Z" fill="#f5f5f5" stroke="#b0b0b0" stroke-width="0.6"/><path d="M2.3 3.4h2.2M2.3 5.3h1.6M2.3 7.3h1.8M4.6 7.3h1.8M2.3 9.3h1.8M4.6 9.3h1.2M2.3 11.3h1.6" stroke="#8e8e8e" stroke-width="0.7"/><path d="M8.4 2.9 L9.8 4.3 L8.4 5.7 L7 4.3Z" fill="#fff" stroke="#909090" stroke-width="0.7"/></symbol>
<symbol id="i-wiz" viewBox="0 0 16 16"><path d="M1.2 1.6 Q3.6 0.4 4.8 1.4 Q3.6 4 3.4 6 Q2.2 8.6 2 9.8 Q0.6 5 1.2 1.6Z" fill="#f8d02c"/><path d="M1.6 5 Q2.6 4 3 6.4 L2.2 8Z" fill="#f4a420"/><path d="M3.4 6.4 L4.6 6.4 L5 11.2 L3.6 12Z" fill="#c02858"/><circle cx="3.9" cy="6.6" r="0.8" fill="#f07848"/><path d="M6 1.2 L9.8 5.6 Q8 7 5.4 6.2 Q6.2 3.6 6 1.2Z" fill="#6a5ce8"/><path d="M6.6 2.6 L8.8 5.4 L7 5.8Z" fill="#a8b8f8"/><circle cx="7.8" cy="7.2" r="1.2" fill="#e8c0a8"/><path d="M5.2 8.4 L9.6 8 L12 6.4 L12.4 7.6 L10.4 9.6 L10.6 15 L4.4 15.2 L6 10.6Z" fill="#6c5cea"/><path d="M7.4 10 L8.4 15 L6 15.2Z" fill="#a8c0f8"/><path d="M4.4 15.2 L6.2 13 L6.4 15.2Z M8.8 15 L9.4 13 L10.6 15Z" fill="#a82868"/><path d="M11.2 7.6 L12.8 4.6" stroke="#b0a0d0" stroke-width="0.8"/><circle cx="13" cy="4.4" r="0.9" fill="#f07030"/><ellipse cx="7.4" cy="15.4" rx="3.8" ry="0.6" fill="#6a5ce8" opacity="0.5"/></symbol>
<symbol id="m-plus" viewBox="0 0 17 17"><defs><radialGradient id="mpg" cx="0.5" cy="0.25" r="0.85"><stop offset="0" stop-color="#64c0f4"/><stop offset="0.45" stop-color="#1c8ad8"/><stop offset="1" stop-color="#0a4e9c"/></radialGradient></defs><circle cx="8.5" cy="8.5" r="8.1" fill="url(#mpg)"/><ellipse cx="8.5" cy="4.6" rx="5.6" ry="3.2" fill="#fff" opacity="0.22"/><path d="M8.5 4 V13 M4 8.5 H13" stroke="#fff" stroke-width="2"/></symbol>
<symbol id="m-x" viewBox="0 0 17 17"><defs><radialGradient id="mxg" cx="0.5" cy="0.8" r="0.9"><stop offset="0" stop-color="#e80000"/><stop offset="0.6" stop-color="#d60808"/><stop offset="1" stop-color="#b42020"/></radialGradient></defs><circle cx="8.5" cy="8.5" r="8.2" fill="url(#mxg)"/><ellipse cx="8.5" cy="4.8" rx="6.4" ry="3.8" fill="#fff" opacity="0.3"/><path d="M5.3 5.3 L11.7 11.7 M11.7 5.3 L5.3 11.7" stroke="#c8c4c4" stroke-width="1.7" stroke-linecap="round"/></symbol>
<symbol id="m-x-g" viewBox="0 0 17 17"><defs><radialGradient id="mxgg" cx="0.5" cy="0.3" r="0.8"><stop offset="0" stop-color="#a4a4a4"/><stop offset="1" stop-color="#787878"/></radialGradient></defs><circle cx="8.5" cy="8.5" r="8.2" fill="url(#mxgg)"/><path d="M5.2 5.2 L11.8 11.8 M11.8 5.2 L5.2 11.8" stroke="#d8d8d8" stroke-width="1.9" stroke-linecap="round"/></symbol>
<symbol id="m-dn-g" viewBox="0 0 17 17"><defs><radialGradient id="mgg" cx="0.5" cy="0.25" r="0.85"><stop offset="0" stop-color="#e0e0e0"/><stop offset="0.6" stop-color="#c0c0c0"/><stop offset="1" stop-color="#a8a8a8"/></radialGradient></defs><circle cx="8.5" cy="8.5" r="8.1" fill="url(#mgg)"/><path d="M8.5 3.6 V12.6 M4.8 9 L8.5 12.8 L12.2 9" stroke="#fff" stroke-width="1.5" fill="none"/></symbol>
<symbol id="m-up-g" viewBox="0 0 17 17"><circle cx="8.5" cy="8.5" r="8.1" fill="url(#mgg)"/><path d="M8.5 13.4 V4.4 M4.8 8 L8.5 4.2 L12.2 8" stroke="#fff" stroke-width="1.5" fill="none"/></symbol>
<symbol id="m-up" viewBox="0 0 17 17"><defs><radialGradient id="mug" cx="0.5" cy="0.25" r="0.85"><stop offset="0" stop-color="#c4e43c"/><stop offset="0.55" stop-color="#8cc010"/><stop offset="1" stop-color="#4e9008"/></radialGradient></defs><circle cx="8.5" cy="8.5" r="8.1" fill="url(#mug)"/><path d="M8.5 13.4 V4.4 M4.8 8 L8.5 4.2 L12.2 8" stroke="#fff" stroke-width="1.5" fill="none"/></symbol>
<symbol id="m-edit" viewBox="0 0 17 19"><defs><filter id="ebl" x="-20%" y="-20%" width="140%" height="140%"><feGaussianBlur stdDeviation="0.5"/></filter></defs><path d="M0.8 1.5 L12 0.6 L13.6 4.2 L9.8 15.1 L4.9 16.5 L0 7.5Z" fill="#f8f8f8"/><path d="M4.4 1.2 L5.6 15.8 M8 0.9 L7.6 15.6" stroke="#e4e4e4" stroke-width="0.8"/><path d="M0.3 7 L4.3 15.9" stroke="#5a5a5a" stroke-width="1.3" filter="url(#ebl)" opacity="0.6"/><path d="M4.4 16.5 L7.2 16.3" stroke="#6a6a6a" stroke-width="0.9" filter="url(#ebl)"/><path d="M8.8 14 L12.2 12.8 L14.4 15.2 L9.2 15.9Z" fill="#3c3c3c" filter="url(#ebl)" opacity="0.85"/><path d="M15 3.8 L10.6 13.4" stroke="#4a84da" stroke-width="2" stroke-linecap="round"/><path d="M15.3 3.6 L10.9 13" stroke="#7ab0f2" stroke-width="0.7"/></symbol>
<symbol id="m-stamp" viewBox="0 0 17 17"><rect width="17" height="17" fill="#fff"/><path d="M3 10.6 L7 8.8 L14.6 8.4 L14.8 11 L9 16 L6.4 16.4 L3 14Z" fill="#8e8e90"/><path d="M3 10.6 L6.4 12.6 L6.4 16.4 L3 14Z" fill="#101018"/><path d="M3.4 10.2 L7 8.8 L9 9 L6.4 12.4Z" fill="#1a3a9a"/><path d="M9 16 L14.8 11 L14.8 9.6 L12.6 9 L14.4 10.6 L9.4 14.8Z" fill="#3c6cc0"/><path d="M7.6 1.8 Q8.8 0.4 10 1.8 Q10.6 5 9.6 8 L9.8 10.4 L8 10.6 L8 8 Q6.8 5 7.6 1.8Z" fill="#089090"/><path d="M8 10.4 L9.8 10.2 L10 11.4 L8 11.6Z" fill="#0a6a7a"/></symbol>
<symbol id="m-dollar" viewBox="0 0 16 18"><g fill="none" stroke="#1a8c2c" stroke-linecap="round"><path d="M12.6 5 Q12.2 2.6 8 2.6 Q3.4 2.6 3.4 5.8 Q3.4 8.2 8 8.9 Q12.8 9.6 12.8 12.4 Q12.8 15.4 8 15.4 Q3.4 15.4 2.8 12.6" stroke-width="3.8"/><path d="M8 0.9 V17.1" stroke-width="2.4"/></g><g fill="none" stroke="#34cc48" stroke-linecap="round"><path d="M12.6 5 Q12.2 2.6 8 2.6 Q3.4 2.6 3.4 5.8 Q3.4 8.2 8 8.9 Q12.8 9.6 12.8 12.4 Q12.8 15.4 8 15.4 Q3.4 15.4 2.8 12.6" stroke-width="2.6"/><path d="M8 1.2 V16.8" stroke-width="1.3"/></g><path d="M6 3.2 Q8 2.4 10 3.2" stroke="#8ae896" stroke-width="0.8" fill="none"/></symbol>
<symbol id="m-print" viewBox="0 0 17 16"><path d="M4 0.6 H13 V5 H4Z" fill="#e8eaec"/><path d="M5 1.6 H12 M5 3 H12" stroke="#a8acb0" stroke-width="0.7"/><path d="M1 4.6 H16 V10.4 L14.6 11 H2.4 L1 10.4Z" fill="#6a7480"/><rect x="4.2" y="5.6" width="8.6" height="4.4" fill="#1a1e26"/><path d="M4.2 7.8 H12.8" stroke="#4a4e56" stroke-width="0.6"/><rect x="1.6" y="5.6" width="2" height="3.4" fill="#e4e6ea"/><rect x="13.4" y="5.6" width="2" height="3.4" fill="#e4e6ea"/><rect x="14" y="9" width="1.2" height="1" fill="#48a0d8"/><path d="M3.6 11 H13.4 L13.8 15.4 H3.2Z" fill="#dcdfe4"/><path d="M3.4 11 V15 M13.6 11 V15" stroke="#b4b8c0" stroke-width="0.8"/></symbol>
<symbol id="m-print-g" viewBox="0 0 17 16"><g opacity="0.55"><path d="M4 0.6 H13 V5 H4Z" fill="#e8e8e8"/><path d="M5 1.6 H12 M5 3 H12" stroke="#b0b0b0" stroke-width="0.7"/><path d="M1 4.6 H16 V10.4 L14.6 11 H2.4 L1 10.4Z" fill="#9a9a9a"/><rect x="4.2" y="5.6" width="8.6" height="4.4" fill="#5a5a5a"/><path d="M4.2 7.8 H12.8" stroke="#8a8a8a" stroke-width="0.6"/><rect x="1.6" y="5.6" width="2" height="3.4" fill="#ececec"/><rect x="13.4" y="5.6" width="2" height="3.4" fill="#ececec"/><path d="M3.6 11 H13.4 L13.8 15.4 H3.2Z" fill="#dedede"/><path d="M3.4 11 V15 M13.6 11 V15" stroke="#b8b8b8" stroke-width="0.8"/></g></symbol>
<symbol id="m-refresh" viewBox="0 0 16 16"><defs><linearGradient id="rfg" x1="0" y1="0" x2="0.6" y2="1"><stop offset="0" stop-color="#f4c040"/><stop offset="0.5" stop-color="#fce068"/><stop offset="1" stop-color="#e09818"/></linearGradient></defs><rect x="0.6" y="1.6" width="14.6" height="13.8" rx="2" fill="url(#rfg)" stroke="#b88418" stroke-width="0.8"/><path d="M14.6 0.2 L8 6.2 L10 6.6 L4.4 12.6 L13 7.4 L10.6 6.8 L15.4 1Z" fill="#f08a18"/><path d="M13.8 1.4 L9.2 6 L10.8 6.4 L7 10.4" stroke="#ffd870" stroke-width="0.6" fill="none"/></symbol>
<symbol id="m-redarrow" viewBox="0 0 18 18"><defs><linearGradient id="rag" x1="0" y1="0" x2="0" y2="1"><stop offset="0" stop-color="#f87888"/><stop offset="0.35" stop-color="#d42434"/><stop offset="1" stop-color="#b01020"/></linearGradient></defs><path d="M4.6 0.6 Q9 -0.2 13.4 0.6 L13.4 8.4 L17.4 8.4 L9 17.6 L0.6 8.4 L4.6 8.4 Z" fill="url(#rag)"/><path d="M6 1.6 L12 1.6 L12 8 L6 8Z" fill="#c01424" opacity="0.55"/><path d="M4.6 0.6 Q9 -0.2 13.4 0.6 L13.4 2 Q9 1 4.6 2Z" fill="#fca0ac"/></symbol>

<symbol id="s-cli" viewBox="0 0 32 32"><path d="M5 31 Q5 20 16 19 Q27 20 27 31 Z" fill="#3a3a3a"/><path d="M13 19 L16 27 L19 19 Z" fill="#f4f4f4"/><path d="M15.2 20 L16.8 20 L17.3 27 L16 29 L14.7 27Z" fill="#111"/><ellipse cx="16" cy="11" rx="6.2" ry="7.6" fill="#c89a74"/><path d="M9.6 10 Q9 2.5 16 2.6 Q23 2.5 22.4 10 Q21 5.8 16 6 Q11 5.8 9.6 10Z" fill="#4a4038"/></symbol>
<symbol id="s-for" viewBox="0 0 32 32"><path d="M4 31 Q4 20 16 19 Q28 20 28 31 Z" fill="#8cc6f4"/><path d="M4 31 Q4 20 16 19 Q28 20 28 31 Z" fill="none" stroke="#5a9ad0" stroke-width="0.8"/><path d="M12.5 19.5 L16 26 L19.5 19.5 Z" fill="#f8f8f8"/><ellipse cx="16" cy="11" rx="6.2" ry="7.6" fill="#c89a74"/><path d="M9.6 10 Q9 2.5 16 2.6 Q23 2.5 22.4 10 Q21 5.8 16 6 Q11 5.8 9.6 10Z" fill="#4a4038"/></symbol>
<symbol id="s-tra" viewBox="0 0 32 32"><path d="M8 8 L30 5 L31 19 L9 23 Z" fill="#f8a018"/><path d="M8 8 L30 5 L30.3 9 L8.2 12 Z" fill="#fcc050"/><path d="M1 14 L9 12.5 L9.5 24 L1 25.5 Z" fill="#d8dce0"/><path d="M1.5 15 L6 14.3 L6 19 L1.5 19.8Z" fill="#5a6a7a"/><path d="M1 25 L31 19.5 L31 22 L1 27.5Z" fill="#333"/><circle cx="6" cy="27" r="2.8" fill="#1a1a1a"/><circle cx="22" cy="24" r="2.6" fill="#1a1a1a"/><circle cx="27" cy="23" r="2.6" fill="#1a1a1a"/></symbol>
<symbol id="s-pro" viewBox="0 0 32 32"><path d="M1 9 L17 6 L31 9.5 L15 13 Z" fill="#f8d88a"/><path d="M1 9 L15 13 L15 28 L1 23 Z" fill="#e8b860"/><path d="M15 13 L31 9.5 L31 24 L15 28 Z" fill="#d8a040"/><path d="M2 25 L15 29.5 L31 25.5 L31 24 L15 28 L1 23Z" fill="#9a8a70" opacity="0.5"/></symbol>
<symbol id="s-len" viewBox="0 0 32 32"><ellipse cx="9" cy="20" rx="6.5" ry="7.5" fill="none" stroke="#333" stroke-width="1.6" transform="rotate(-25 9 20)"/><ellipse cx="21" cy="11" rx="6.5" ry="7.5" fill="none" stroke="#333" stroke-width="1.6" transform="rotate(-25 21 11)"/><path d="M13 14 Q15 13 17 16" stroke="#222" stroke-width="1.6" fill="none"/><path d="M26 6 Q31 6 30 12 M4 27 Q8 31 13 28" stroke="#222" stroke-width="1.6" fill="none"/></symbol>
<symbol id="s-his" viewBox="0 0 32 32"><path d="M3.5 2.5 L22 2.5 L28.5 9 L28.5 30.5 L3.5 30.5 Z" fill="url(#gPage)" stroke="#8aa4c4"/><path d="M22 2.5 L22 9 L28.5 9" fill="#e8eef6" stroke="#8aa4c4"/><rect x="7" y="16" width="18" height="9" fill="#e4ecf6" stroke="#8aa4c4"/><path d="M7 19 H25 M13 16 V25 M19 16 V25" stroke="#8aa4c4"/><path d="M7 27.5 H17" stroke="#a8bcd4"/><circle cx="8" cy="6" r="5" fill="#eef2f6" fill-opacity="0.7" stroke="#9aa2aa" stroke-width="1.6"/><path d="M11.5 9.5 L16 14.5" stroke="#8a8a8a" stroke-width="2.4"/></symbol>
<symbol id="s-rel" viewBox="0 0 32 32"><path d="M4 1 L29 1 L29 26 L24 31 L4 31 Z" fill="#f4f4f4" stroke="#c4c4c4"/><rect x="4" y="1" width="3" height="30" fill="#7fd0e8"/><path d="M24 31 L24 26 L29 26Z" fill="#d0d0d0"/><path d="M10 6h15M10 9h15M10 12h15M10 15h15M10 18h15M10 21h12M10 24h10" stroke="#d4d4d4"/></symbol>
<symbol id="s-gra" viewBox="0 0 32 32"><rect x="1" y="5" width="9" height="22" fill="#f4c860" stroke="#c89a28"/><rect x="11.5" y="15" width="8" height="14" fill="#5ac83a" stroke="#2a8a1a"/><rect x="21" y="1" width="10" height="30" fill="#4a98e8" stroke="#1a5cb0"/><rect x="2" y="6" width="3" height="20" fill="#fbe4a0"/><rect x="12.5" y="16" width="2.5" height="12" fill="#a8e888"/><rect x="22" y="2" width="3" height="28" fill="#9cc8f8"/></symbol>
<symbol id="s-sup" viewBox="0 0 32 32"><path d="M3 31 Q3 20 16 19 Q29 20 29 31 Z" fill="#e8e8e8" stroke="#bcbcbc" stroke-width="0.8"/><path d="M12.5 19.5 L16 25 L19.5 19.5 Z" fill="#c89a74"/><ellipse cx="16" cy="11" rx="6.2" ry="7.6" fill="#d0a27c"/><path d="M9.6 10 Q9 2.5 16 2.6 Q23 2.5 22.4 10 Q21 5.8 16 6 Q11 5.8 9.6 10Z" fill="#7a4a28"/><path d="M9 12 Q8 3 16 2.5 Q24 3 23 12" fill="none" stroke="#333" stroke-width="1.4"/><rect x="21.5" y="9" width="3" height="6" rx="1.3" fill="#222"/><path d="M23 15 Q22 19 18 18" stroke="#333" fill="none"/></symbol>

<symbol id="t-ped" viewBox="0 0 26 32"><use href="#docbig"/></symbol>
<symbol id="t-rem" viewBox="0 0 32 32"><defs><linearGradient id="gOr2" x1="0" y1="0" x2="0" y2="1"><stop offset="0" stop-color="#ffd234"/><stop offset="0.5" stop-color="#ffb024"/><stop offset="1" stop-color="#fb8e18"/></linearGradient></defs><rect x="0.5" y="0.3" width="30.7" height="31" rx="11.5" ry="11.5" fill="url(#gOr2)"/><g fill="none" stroke="#e87808" stroke-opacity="0.55" stroke-width="2.3" stroke-linecap="round" stroke-linejoin="round" transform="translate(0.3 0.7)"><path d="M14.4 13.3 H24.6 M20.3 8.3 L26.2 13.3 L20.3 18.3"/><path d="M10.7 18.6 H17.6 M11.2 13.3 L5.7 18.6 L11.2 23.8"/></g><g fill="none" stroke="#fff" stroke-width="2.7" stroke-linecap="round" stroke-linejoin="round"><path d="M14.4 13.3 H24.6 M20.3 8.3 L26.2 13.3 L20.3 18.3"/><path d="M10.7 18.6 H17.6 M11.2 13.3 L5.7 18.6 L11.2 23.8"/></g></symbol>
<symbol id="t-sol" viewBox="0 0 36 36"><defs><clipPath id="penc"><path d="M2.3 33.3 C1.9 26.6 21 5.2 31.7 2.4 Q34.8 1.7 34 4.7 C30 14.5 8.5 33.4 2.3 33.3 Z"/></clipPath><linearGradient id="penb" x1="0.3" y1="0.3" x2="0.7" y2="0.7"><stop offset="0" stop-color="#0a62c4"/><stop offset="0.5" stop-color="#0a56b0"/><stop offset="1" stop-color="#053478"/></linearGradient></defs><g clip-path="url(#penc)"><rect x="0" y="0" width="36" height="36" fill="url(#penb)"/><path d="M17.6 12 L25.4 19.6 L40 4 L30 -4Z" fill="#bcc4ce"/><path d="M22 12 L31 3 L33 4.6 L25 13.4Z" fill="#e6eaf0"/><path d="M0 30 L4.8 27.4 L8 30.4 L4 36Z" fill="#e4e8ee"/><path d="M7 27 L19 14" stroke="#2a7ae0" stroke-width="1.2" opacity="0.7"/></g><path d="M2.3 33.3 C1.9 26.6 21 5.2 31.7 2.4 Q34.8 1.7 34 4.7 C30 14.5 8.5 33.4 2.3 33.3 Z" fill="none" stroke="#0a0a0a" stroke-width="1.25"/></symbol>
<symbol id="t-age" viewBox="0 0 31 31"><defs><linearGradient id="calb" x1="0" y1="0" x2="0.2" y2="1"><stop offset="0" stop-color="#dce8f6"/><stop offset="0.6" stop-color="#f6f9fd"/><stop offset="1" stop-color="#ffffff"/></linearGradient><linearGradient id="calo" x1="0" y1="0" x2="0" y2="1"><stop offset="0" stop-color="#ee8a48"/><stop offset="1" stop-color="#d8682c"/></linearGradient></defs><path d="M24 29 L29.5 29.6 L33 26 L29 25Z" fill="#000" opacity="0.2"/><path d="M1.1 0.8 L28.9 3.8 L28.9 29 L1.1 24.9Z" fill="url(#calb)" stroke="#b4c4d8" stroke-width="0.6"/><path d="M26.4 3.6 L28.9 3.8 L28.9 29 L26.4 28.6Z" fill="#c4d2e2"/><path d="M1.1 0.8 L28.9 3.8 L28.9 11.9 L1.1 8.8Z" fill="url(#calo)"/><path d="M26.4 3.5 L28.9 3.8 L28.9 11.9 L26.4 11.6Z" fill="#c87044"/><path d="M1.3 1 L28.7 4 L28.7 5 L1.3 2Z" fill="#f4a470" opacity="0.8"/><path d="M5.2 5.2 L10.6 5.9 L10.6 7.2 L5.2 6.5Z" fill="#fff" opacity="0.9"/><g stroke="#9ab0cc" stroke-width="0.7" opacity="0.8"><path d="M7.5 12.2h1.2M10.6 12.6h1.2M13.7 13h1.2M16.8 13.4h1.2M19.9 13.8h1.2M23 14.2h1.2M7.5 15.4h1.2M13.7 16.2h1.2M16.8 16.6h1.2M19.9 17h1.2M23 17.4h1.2M7.5 18.6h1.2M10.6 19h1.2M13.7 19.4h1.2M16.8 19.8h1.2M19.9 20.2h1.2M23 20.6h1.2M7.5 21.8h1.2M10.6 22.2h1.2M13.7 22.6h1.2M16.8 23h1.2M19.9 23.4h1.2"/></g><g stroke="#e86a5a" stroke-width="0.7"><path d="M4.4 14.8h1.2M4.4 17h1.2M4.4 19.2h1.2"/></g><circle cx="8.4" cy="13.6" r="1.2" fill="#fff" stroke="#d84a4a" stroke-width="0.6"/></symbol>

<symbol id="b-lupa" viewBox="0 0 32 32"><defs><radialGradient id="lupg" cx="0.45" cy="0.4" r="0.65"><stop offset="0" stop-color="#ececec"/><stop offset="0.8" stop-color="#e2e2e2"/><stop offset="1" stop-color="#d4d4d4"/></radialGradient></defs><path d="M16.6 19.4 L26.6 30" stroke="#8e8e8e" stroke-width="3.4" stroke-linecap="round"/><path d="M17.2 19.6 L26.4 29.6" stroke="#e4e4e4" stroke-width="1.3" stroke-linecap="round"/><circle cx="11.1" cy="10.8" r="9.6" fill="url(#lupg)" stroke="#9c9c9c" stroke-width="1.1"/></symbol>
<symbol id="b-ferr" viewBox="0 0 32 32"><path d="M7.5 7.5 L28.6 28.8" stroke="#6a6a6a" stroke-width="3.6" stroke-linecap="round"/><path d="M7.5 7.5 L28.6 28.8" stroke="#d8d8d8" stroke-width="2.4" stroke-linecap="round"/><path d="M16 16 L28 28" stroke="#9a9a9a" stroke-width="2.4" stroke-dasharray="0.8 0.9"/><path d="M1.2 4.6 L5.4 0.6 L8 1.4 L11.6 5.4 L10.2 7 L12.2 10 L9 13.2 L6.4 12.8 L1.6 7.6Z" fill="#e6e6e6" stroke="#8a8a8a" stroke-width="0.7"/><path d="M3 5.4 L6.6 2.2 M4.6 8.4 L8.8 4.6 M7 11 L10.4 8" stroke="#a8a8a8" stroke-width="0.7"/><rect x="7.4" y="7.2" width="3" height="3" fill="#b4b4b4" stroke="#8a8a8a" stroke-width="0.5" transform="rotate(45 8.9 8.7)"/><path d="M21 6.5 L15.2 15.6" stroke="#7a7a7a" stroke-width="2.2"/><path d="M21 6.5 L15.2 15.6" stroke="#e0e0e0" stroke-width="1"/><path d="M14.6 15.4 L8 28" stroke="#2e2e2e" stroke-width="3.6" stroke-linecap="round"/><path d="M14 2.6 Q17 0.2 21 1 Q24.4 2 26 4.2 L29.6 5 L30 7 L27.4 9.4 L25.4 9 L23.6 6.6 L21.2 7.4 L18.6 5.6 Q16.6 3.4 14 2.6Z" fill="#f4f4f4" stroke="#9a9a9a" stroke-width="0.7"/></symbol>
<symbol id="b-mais" viewBox="0 0 22 28"><defs><linearGradient id="mof" x1="0" y1="0" x2="0" y2="1"><stop offset="0" stop-color="#1660c4"/><stop offset="1" stop-color="#0a3690"/></linearGradient><linearGradient id="mop" x1="0" y1="0" x2="0" y2="1"><stop offset="0" stop-color="#ffffff"/><stop offset="1" stop-color="#e6f0fa"/></linearGradient></defs><rect x="0" y="0" width="22" height="28" rx="1.2" fill="url(#mof)"/><rect x="2.2" y="2.2" width="17.6" height="22.6" fill="url(#mop)"/><path d="M6.8 6.2 L9 8.8 L14 4.4" stroke="#4aaa2a" stroke-width="1.9" fill="none"/><path d="M6.8 13 L9 15.6 L14 11.2" stroke="#4aaa2a" stroke-width="1.9" fill="none"/><path d="M7 19 L12 24 M12 19 L7 24" stroke="#dc2a2a" stroke-width="1.8"/></symbol>
<symbol id="b-gear" viewBox="0 0 30 31"><defs><linearGradient id="gearF" x1="0" y1="0" x2="1" y2="1"><stop offset="0" stop-color="#b4b8c4"/><stop offset="0.5" stop-color="#80849a"/><stop offset="1" stop-color="#50546a"/></linearGradient></defs><ellipse cx="9.4" cy="17.5" rx="7.5" ry="10.5" fill="#000" opacity="0.28" transform="rotate(12 9.4 17.5)"/><path d="M19.7 3.6 L20.5 3.4 L21.3 3.3 L22.1 3.4 L22.8 3.5 L23.6 3.8 L24.3 4.1 L24.9 4.6 L25.5 5.1 L26.1 5.7 L26.6 6.4 L27.1 7.2 L27.5 8.0 L27.8 9.0 L28.1 9.9 L28.2 10.9 L28.3 12.0 L28.4 13.0 L28.3 14.1 L28.2 15.2 L28.0 16.3 L27.8 17.3 L27.4 18.4 L27.0 19.4 L26.6 20.3 L26.0 21.2 L25.5 22.1 L24.8 22.8 L24.2 23.5 L23.5 24.2 L22.7 24.7 L22.0 25.1 L21.2 25.5 L20.4 25.7 L19.6 25.8 L18.9 25.9 L18.1 25.8 L17.4 25.6 L16.6 25.4 L15.9 25.0 L15.3 24.5 L7.7 25.9 L8.3 26.4 L9.0 26.8 L9.8 27.0 L10.5 27.2 L11.3 27.3 L12.0 27.2 L12.8 27.1 L13.6 26.9 L14.4 26.5 L15.1 26.1 L15.9 25.6 L16.6 24.9 L17.2 24.2 L17.9 23.5 L18.4 22.6 L19.0 21.7 L19.4 20.8 L19.8 19.8 L20.2 18.7 L20.4 17.7 L20.6 16.6 L20.7 15.5 L20.8 14.4 L20.7 13.4 L20.6 12.3 L20.5 11.3 L20.2 10.4 L19.9 9.4 L19.5 8.6 L19.0 7.8 L18.5 7.1 L17.9 6.5 L17.3 6.0 L16.7 5.5 L16.0 5.2 L15.2 4.9 L14.5 4.8 L13.7 4.7 L12.9 4.8 L12.1 5.0Z" fill="#141414"/><path d="M22.0 18.0 L21.4 20.0 L29.0 18.6 L29.6 16.6Z" fill="#f4f4f4" stroke="#555" stroke-width="0.3"/><path d="M20.7 21.9 L19.7 23.7 L27.3 22.3 L28.3 20.5Z" fill="#b8b8b8" stroke="#555" stroke-width="0.3"/><path d="M18.6 25.3 L17.3 26.7 L24.9 25.3 L26.2 23.9Z" fill="#b8b8b8" stroke="#555" stroke-width="0.3"/><path d="M15.9 27.8 L14.4 28.6 L22.0 27.2 L23.5 26.4Z" fill="#b8b8b8" stroke="#555" stroke-width="0.3"/><path d="M12.9 29.1 L11.3 29.3 L18.9 27.9 L20.5 27.7Z" fill="#b8b8b8" stroke="#555" stroke-width="0.3"/><path d="M9.8 29.1 L8.4 28.6 L16.0 27.2 L17.4 27.7Z" fill="#b8b8b8" stroke="#555" stroke-width="0.3"/><path d="M12.3 2.9 L13.9 2.7 L21.5 1.3 L19.9 1.5Z" fill="#f4f4f4" stroke="#555" stroke-width="0.3"/><path d="M15.4 2.9 L16.8 3.4 L24.4 2.0 L23.0 1.5Z" fill="#f4f4f4" stroke="#555" stroke-width="0.3"/><path d="M18.2 4.2 L19.3 5.2 L26.9 3.8 L25.8 2.8Z" fill="#f4f4f4" stroke="#555" stroke-width="0.3"/><path d="M20.4 6.6 L21.2 8.1 L28.8 6.7 L28.0 5.2Z" fill="#f4f4f4" stroke="#555" stroke-width="0.3"/><path d="M21.8 9.9 L22.2 11.8 L29.8 10.4 L29.4 8.5Z" fill="#f4f4f4" stroke="#555" stroke-width="0.3"/><path d="M22.4 13.8 L22.3 15.9 L29.9 14.5 L30.0 12.4Z" fill="#f4f4f4" stroke="#555" stroke-width="0.3"/><path d="M20.5 17.5 L21.9 18.3 L21.5 19.7 L19.9 19.6 L19.4 20.9 L20.5 22.2 L19.9 23.5 L18.4 22.7 L17.6 23.8 L18.4 25.6 L17.5 26.5 L16.3 25.2 L15.4 25.9 L15.6 27.9 L14.6 28.5 L13.9 26.7 L12.9 27.1 L12.6 29.1 L11.6 29.3 L11.4 27.3 L10.4 27.2 L9.6 29.1 L8.6 28.7 L8.9 26.7 L8.0 26.2 L6.8 27.7 L6.0 27.0 L6.8 25.1 L6.2 24.2 L4.7 25.2 L4.1 24.1 L5.3 22.6 L4.9 21.4 L3.3 21.8 L3.0 20.5 L4.5 19.4 L4.4 18.0 L2.8 17.8 L2.9 16.4 L4.5 15.9 L4.7 14.5 L3.3 13.7 L3.7 12.3 L5.3 12.4 L5.8 11.1 L4.7 9.8 L5.3 8.5 L6.8 9.3 L7.6 8.2 L6.8 6.4 L7.7 5.5 L8.9 6.8 L9.8 6.1 L9.6 4.1 L10.6 3.5 L11.3 5.3 L12.3 4.9 L12.6 2.9 L13.6 2.7 L13.8 4.7 L14.8 4.8 L15.6 2.9 L16.6 3.3 L16.3 5.3 L17.2 5.8 L18.4 4.3 L19.2 5.0 L18.4 6.9 L19.0 7.8 L20.5 6.8 L21.1 7.9 L19.9 9.4 L20.3 10.6 L21.9 10.2 L22.2 11.5 L20.7 12.6 L20.8 14.0 L22.4 14.2 L22.3 15.6 L20.7 16.1Z" fill="url(#gearF)" stroke="#5a5e6a" stroke-width="0.4"/><ellipse cx="12.6" cy="16.0" rx="6.6" ry="9.4" fill="none" stroke="#c8ccd6" stroke-width="0.9" transform="rotate(12 12.6 16.0)"/><ellipse cx="13.2" cy="16.6" rx="4.6" ry="6.6" fill="#18181c" transform="rotate(12 13.2 16.6)"/><ellipse cx="14.1" cy="18.0" rx="3.1" ry="4.4" fill="#e6dfd0" transform="rotate(12 14.1 18.0)"/><ellipse cx="13.2" cy="16.6" rx="4.6" ry="6.6" fill="none" stroke="#9096a4" stroke-width="0.8" transform="rotate(12 13.2 16.6)"/></symbol>
</defs></svg>
</body></html>
